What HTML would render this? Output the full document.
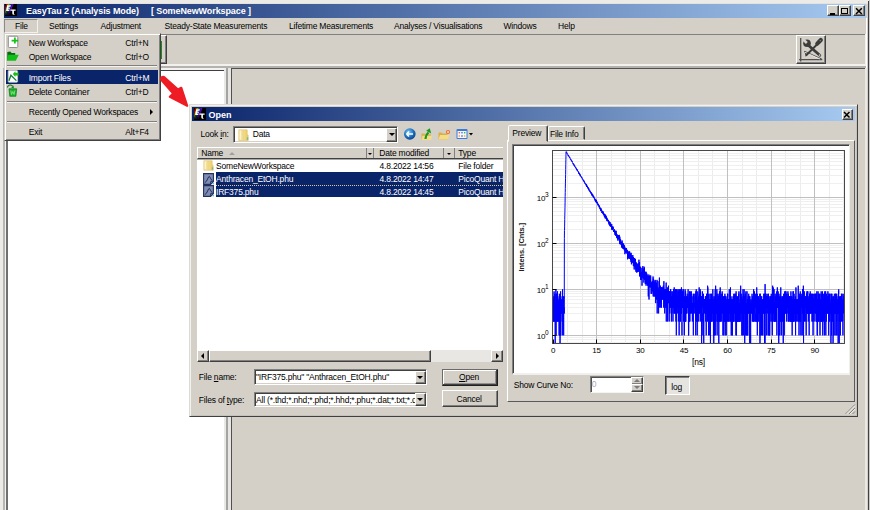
<!DOCTYPE html>
<html><head><meta charset="utf-8">
<style>
*{box-sizing:border-box}
html,body{margin:0;padding:0}
body{width:870px;height:510px;overflow:hidden;position:relative;background:#ecebe7;font-family:"Liberation Sans",sans-serif;font-size:8.5px;letter-spacing:-0.2px;color:#000}
.a{position:absolute}
.t{position:absolute;white-space:nowrap;line-height:10px;font-size:8.5px}
.raised{border:1px solid;border-color:#fff #404040 #404040 #fff;box-shadow:inset -1px -1px #808080;background:#d4d0c8}
.sunken{border:1px solid;border-color:#808080 #fff #fff #808080;box-shadow:inset 1px 1px #404040}
.cap{position:absolute;background:linear-gradient(to right,#0a246a,#a6caf0)}
.cbtn{position:absolute;width:12px;height:11px;background:#d4d0c8;border:1px solid;border-color:#fff #404040 #404040 #fff;box-shadow:inset -1px -1px #808080}
</style></head><body>

<!-- main window face -->
<div class="a" style="left:3px;top:3px;width:866px;height:507px;background:#d4d0c8;border-left:1px solid #e4e2dc;border-top:1px solid #e4e2dc"></div>
<div class="a" style="left:868px;top:1px;width:1px;height:509px;background:#404040"></div>
<div class="a" style="left:866px;top:18px;width:1px;height:492px;background:#ffffff"></div>

<!-- title bar -->
<div class="cap" style="left:4px;top:4px;width:862px;height:14px"></div>
<svg class="a" style="left:5px;top:4px" width="12" height="12" viewBox="0 0 12 12">
<defs><linearGradient id="fd5" x1="0" y1="0" x2="0" y2="1"><stop offset="0" stop-color="#000" stop-opacity="0"/><stop offset=".45" stop-color="#000" stop-opacity=".15"/><stop offset="1" stop-color="#000" stop-opacity=".95"/></linearGradient></defs>
<rect width="12" height="12" fill="#000"/>
<g opacity=".8"><path d="M1.20,0 L2.65,0 L-1.35,11 L-2.80,11 Z" fill="#e00000"/><path d="M2.65,0 L4.10,0 L0.10,11 L-1.35,11 Z" fill="#f0d000"/><path d="M4.10,0 L5.55,0 L1.55,11 L0.10,11 Z" fill="#20c020"/><path d="M5.55,0 L7.00,0 L3.00,11 L1.55,11 Z" fill="#2040ff"/><path d="M7.00,0 L8.45,0 L4.45,11 L3.00,11 Z" fill="#8a00ff"/></g>
<rect width="12" height="12" fill="url(#fd5)"/>
<path d="M2.2,1.3 H5.9 L5.5,2.7 H3.7 L3.4,3.7 H5.1 L4.8,4.8 H3.1 L2.8,5.6 H4.6 L4.2,6.9 H1.1 Z" fill="#fff"/>
<path d="M5.4,5.4 H10.6 V6.8 H8.9 V9.6 Q9,10.3 9.8,10.1 V10.6 Q7.4,11 7.3,9.4 V6.8 H5.4 Z" fill="#fff"/>
</svg>
<div class="t" style="left:26px;top:6px;color:#fff;font-weight:bold;font-size:9px;letter-spacing:-0.1px">EasyTau 2 (Analysis Mode)</div>
<div class="t" style="left:151px;top:6px;color:#fff;font-weight:bold;font-size:9px;letter-spacing:-0.1px">[ SomeNewWorkspace ]</div>
<div class="cbtn" style="left:827px;top:5px"><div class="a" style="left:1.5px;top:7px;width:5.5px;height:1.5px;background:#000"></div></div>
<div class="cbtn" style="left:839px;top:5px"><div class="a" style="left:0.8px;top:1.8px;width:7px;height:6px;border:1px solid #000;border-top-width:1.6px"></div></div>
<div class="cbtn" style="left:853px;top:5px"><svg class="a" style="left:0.5px;top:1px" width="8" height="8"><path d="M1,1.2 L6.8,7 M6.8,1.2 L1,7" stroke="#000" stroke-width="1.5"/></svg></div>

<!-- menu bar -->
<div class="a" style="left:4px;top:19px;width:34px;height:14px;border:1px solid;border-color:#8a8a88 #f2f1ee #f2f1ee #8a8a88"></div>
<div class="t" style="left:15px;top:21px">File</div>
<div class="t" style="left:49px;top:21px">Settings</div>
<div class="t" style="left:100.5px;top:21px">Adjustment</div>
<div class="t" style="left:164.5px;top:21px">Steady-State Measurements</div>
<div class="t" style="left:289px;top:21px">Lifetime Measurements</div>
<div class="t" style="left:394px;top:21px">Analyses / Visualisations</div>
<div class="t" style="left:503.5px;top:21px">Windows</div>
<div class="t" style="left:558px;top:21px">Help</div>

<!-- toolbar -->
<div class="a" style="left:4px;top:34px;width:862px;height:1px;background:#808080"></div>
<div class="a" style="left:4px;top:64px;width:862px;height:2px;background:#f2f1ee"></div>
<div class="a" style="left:4px;top:66px;width:862px;height:2px;background:#b4b2ae"></div>
<div class="a" style="left:865px;top:34px;width:1px;height:32px;background:#f2f1ee"></div>
<div class="a raised" style="left:130px;top:35px;width:37px;height:29px"></div>
<div class="a raised" style="left:796px;top:35px;width:30px;height:29px"></div>
<svg class="a" style="left:798px;top:37px" width="26" height="26" viewBox="0 0 26 26">
<path d="M2.7,1 V24.6 M1.1,22.7 H24.3" stroke="#505050" stroke-width="1.3" fill="none"/>
<path d="M6.2,14.3 L23.5,22" stroke="#505050" stroke-width="1.3" fill="none"/>
<path d="M6.8,15 L7.8,20 L9.5,17 Z" fill="#404040"/>
<path d="M7,15.3 L22,22" stroke="#fafafa" stroke-width=".8" fill="none"/>
<path d="M10,8 L21.8,18.3" stroke="#3c3c3c" stroke-width="2.8" stroke-linecap="round"/>
<circle cx="9" cy="6.2" r="3.8" fill="#3c3c3c"/>
<path d="M8.8,6 L5.2,2.3" stroke="#d4d0c8" stroke-width="2.6" stroke-linecap="butt"/>
<circle cx="21.6" cy="18.1" r=".9" fill="#bdbdbd"/>
<path d="M19,7.5 L8.5,18" stroke="#3c3c3c" stroke-width="2" stroke-linecap="round"/>
<path d="M22.8,3 L19.3,6.6" stroke="#3c3c3c" stroke-width="4.2" stroke-linecap="round"/>
<circle cx="22.3" cy="3.6" r=".7" fill="#8a8a8a"/>
</svg>

<!-- panels -->
<div class="a" style="left:5px;top:68px;width:221px;height:442px;background:#fff;border-left:1px solid #f4f4f2;border-top:2px solid #f2f1ef;border-right:2px solid #e8e8e6"></div>
<div class="a" style="left:3px;top:68px;width:2px;height:442px;background:#b8b6b0"></div>
<div class="a" style="left:6px;top:70px;width:2px;height:440px;background:#707070"></div>
<div class="a" style="left:6px;top:70px;width:218px;height:1px;background:#404040"></div>
<div class="a" style="left:226px;top:68px;width:2px;height:442px;background:#a4a4a2"></div>
<div class="a" style="left:228px;top:68px;width:3px;height:442px;background:#e8e6e2"></div>
<div class="a" style="left:231px;top:68px;width:635px;height:442px;background:#d4d0c8;border-left:1px solid #505050;border-top:1px solid #505050"></div>
<div class="a" style="left:865px;top:68px;width:2px;height:442px;background:#eae8e4"></div>
<div class="a" style="left:869px;top:0;width:1px;height:510px;background:#c8c8c8"></div>

<!-- File menu dropdown -->
<div class="a" style="left:4px;top:33px;width:156.5px;height:108px;background:#d4d0c8;border:1px solid;border-color:#d4d0c8 #404040 #404040 #d4d0c8;box-shadow:inset 1px 1px #fff,inset -1px -1px #808080"></div>
<div class="t" style="left:28.7px;top:38.3px">New Workspace</div><div class="t" style="left:125.3px;top:38.3px">Ctrl+N</div>
<div class="t" style="left:28.7px;top:52.4px">Open Workspace</div><div class="t" style="left:125.3px;top:52.4px">Ctrl+O</div>
<div class="a" style="left:7px;top:65px;width:150px;height:1px;background:#808080"></div>
<div class="a" style="left:7px;top:66px;width:150px;height:1px;background:#f4f3f0"></div>
<div class="a" style="left:6px;top:70px;width:152px;height:14px;background:#0a246a"></div>
<svg class="a" style="left:7px;top:35px" width="13" height="64" viewBox="0 0 13 64">
<rect x="1.3" y="1.2" width="9.5" height="11.3" rx="1" fill="#fff" stroke="#8c8c8c" stroke-width="1"/>
<path d="M4.6,5.6 H11.2 M7.9,2.6 V8.6" stroke="#18c018" stroke-width="1.7"/>
<path d="M0.3,17 L3.3,16.6 L4.6,17.9 L8.2,17.9 L8.2,20 L0.3,25.6 Z" fill="#0a6a14"/>
<path d="M1.3,19.8 L11.8,19.8 L8.8,25.8 L-0.2,25.8 Z" fill="#10c018"/>
<rect x="1.2" y="35.6" width="9.4" height="11.6" rx=".8" fill="#fff" stroke="#c8c8c8" stroke-width=".8"/>
<path d="M2,45.8 L3.9,40.2 L9.4,45.6" stroke="#108030" stroke-width="1.3" fill="none"/>
<path d="M5.8,39.1 L8.4,36.3 L8.4,37.8 L11.5,37.8 L11.5,40.4 L8.4,40.4 L8.4,41.9 Z" fill="#18c018"/>
<path d="M0,52.6 Q2.5,48.2 5.6,51.2" stroke="#107a20" stroke-width="1.1" fill="none"/>
<path d="M4.2,52.6 L6.6,50.6 L6.8,53.4 Z" fill="#107a20"/>
<path d="M2,53.8 H9.7 L8.9,61.3 H2.8 Z" fill="#18b028" stroke="#0a7a18" stroke-width=".7"/>
<path d="M3.8,55.5 L4.5,59.5 L5.8,56.5 L7.1,59.5 L7.8,55.5" stroke="#9ef0a0" stroke-width=".7" fill="none"/>
</svg>
<div class="t" style="left:28.7px;top:72.5px;color:#fff">Import Files</div><div class="t" style="left:125.3px;top:72.5px;color:#fff">Ctrl+M</div>
<div class="t" style="left:28.7px;top:86.5px">Delete Container</div><div class="t" style="left:125.3px;top:86.5px">Ctrl+D</div>
<div class="a" style="left:7px;top:100.5px;width:150px;height:1px;background:#808080"></div>
<div class="a" style="left:7px;top:101.5px;width:150px;height:1px;background:#f4f3f0"></div>
<div class="t" style="left:28.7px;top:107px">Recently Opened Workspaces</div>
<div class="a" style="left:149.5px;top:108.5px;width:0;height:0;border-left:3px solid #000;border-top:3px solid transparent;border-bottom:3px solid transparent"></div>
<div class="a" style="left:7px;top:121px;width:150px;height:1px;background:#808080"></div>
<div class="a" style="left:7px;top:122px;width:150px;height:1px;background:#f4f3f0"></div>
<div class="t" style="left:28.7px;top:127px">Exit</div><div class="t" style="left:125.3px;top:127px">Alt+F4</div>

<div class="a" style="left:160.5px;top:41px;width:1.2px;height:18px;background:#1e8a1e"></div>
<!-- red arrow -->
<svg class="a" style="left:0;top:0" width="870" height="510">
<path d="M161,79.5 Q161,76.5 164,77 L178,89.5 L181.3,87.8 L187.2,105.8 L169.8,96.8 L173.2,93.6 Z" fill="#ee1c24" stroke="#ee1c24" stroke-width="2.2" stroke-linejoin="round"/>
</svg>

<!-- Open dialog -->
<div class="a" style="left:189px;top:104px;width:669px;height:313px;background:#d4d0c8;border:1px solid;border-color:#dcdad5 #404040 #404040 #dcdad5;box-shadow:inset 1px 1px #f2f1ee,inset -1px -1px #c4c2bc"></div>
<div class="cap" style="left:192px;top:107px;width:663px;height:14px"></div>
<svg class="a" style="left:194px;top:108px" width="12" height="12" viewBox="0 0 12 12">
<defs><linearGradient id="fd194" x1="0" y1="0" x2="0" y2="1"><stop offset="0" stop-color="#000" stop-opacity="0"/><stop offset=".45" stop-color="#000" stop-opacity=".15"/><stop offset="1" stop-color="#000" stop-opacity=".95"/></linearGradient></defs>
<rect width="12" height="12" fill="#000"/>
<g opacity=".8"><path d="M1.20,0 L2.65,0 L-1.35,11 L-2.80,11 Z" fill="#e00000"/><path d="M2.65,0 L4.10,0 L0.10,11 L-1.35,11 Z" fill="#f0d000"/><path d="M4.10,0 L5.55,0 L1.55,11 L0.10,11 Z" fill="#20c020"/><path d="M5.55,0 L7.00,0 L3.00,11 L1.55,11 Z" fill="#2040ff"/><path d="M7.00,0 L8.45,0 L4.45,11 L3.00,11 Z" fill="#8a00ff"/></g>
<rect width="12" height="12" fill="url(#fd194)"/>
<path d="M2.2,1.3 H5.9 L5.5,2.7 H3.7 L3.4,3.7 H5.1 L4.8,4.8 H3.1 L2.8,5.6 H4.6 L4.2,6.9 H1.1 Z" fill="#fff"/>
<path d="M5.4,5.4 H10.6 V6.8 H8.9 V9.6 Q9,10.3 9.8,10.1 V10.6 Q7.4,11 7.3,9.4 V6.8 H5.4 Z" fill="#fff"/>
</svg>
<div class="t" style="left:208.5px;top:109.5px;color:#fff;font-weight:bold;font-size:9px;letter-spacing:0">Open</div>
<div class="cbtn" style="left:842px;top:109px;width:11px;height:10.5px"><svg class="a" style="left:-0.5px;top:0.5px" width="8" height="8"><path d="M1,1 L6.5,6.5 M6.5,1 L1,6.5" stroke="#000" stroke-width="1.5"/></svg></div>

<!-- look in -->
<div class="t" style="left:200.5px;top:129.3px">Look <u style="text-decoration-thickness:1px">i</u>n:</div>
<div class="a" style="left:233px;top:126px;width:165px;height:17px;background:#fff;border:1px solid;border-color:#808080 #fff #fff #808080;box-shadow:inset 1px 1px #404040,inset -1px -1px #d4d0c8"></div>
<svg class="a" style="left:237.5px;top:128.5px" width="11" height="12.5" viewBox="0 0 11 12" preserveAspectRatio="none">
<defs><linearGradient id="fg23751285" x1="0" y1="0" x2="1" y2="0"><stop offset="0" stop-color="#f0dc8c"/><stop offset=".45" stop-color="#f6e6a8"/><stop offset=".55" stop-color="#f2dc84"/><stop offset="1" stop-color="#e8c860"/></linearGradient></defs>
<path d="M0.8,0.8 H9.2 V5 L10.2,6 V11.2 H0.8 Z" fill="url(#fg23751285)" stroke="#e0c070" stroke-width=".6"/>
<path d="M2.2,1.5 V10" stroke="#fffbe8" stroke-width="1"/>
<path d="M5,1 V11" stroke="#dcc070" stroke-width=".6"/>
<rect x="8.8" y="8" width="1.4" height="2.4" fill="#70b8a0"/>
</svg>
<div class="t" style="left:252.7px;top:129.3px">Data</div>
<div class="a raised" style="left:386px;top:127.5px;width:11px;height:14px"></div>
<div class="a" style="left:389px;top:133px;width:0;height:0;border-top:3px solid #000;border-left:3px solid transparent;border-right:3px solid transparent"></div>
<svg class="a" style="left:403px;top:127px" width="72" height="14" viewBox="0 0 72 14">
<defs><radialGradient id="bb" cx=".4" cy=".35" r=".7"><stop offset="0" stop-color="#7ec8f8"/><stop offset=".6" stop-color="#1a6fc0"/><stop offset="1" stop-color="#0a3a80"/></radialGradient></defs>
<circle cx="6.8" cy="7" r="5.8" fill="url(#bb)"/>
<path d="M3.5,7 H10 M3.5,7 L6,4.5 M3.5,7 L6,9.5" stroke="#fff" stroke-width="1.5" fill="none"/>
<path d="M18.5,6.5 H21.5 L22.5,7.5 H28 V13 H18.5 Z" fill="#d8b04a"/>
<path d="M19.5,8.8 H29 L28,13 H18.5 Z" fill="#f4dc88"/>
<path d="M22.5,12 Q23,7.5 25.5,5.5" stroke="#1a9a1a" stroke-width="2.2" fill="none"/>
<path d="M23.2,3.8 L26.8,1.2 L28.2,6.4 Z" fill="#1a9a1a"/>
<path d="M35.5,5.5 H38.5 L39.5,6.5 H44.5 V12.5 H35.5 Z" fill="#d8b04a"/>
<path d="M37,8 H46.5 L44.5,12.5 H35.5 Z" fill="#f4dc88"/>
<circle cx="45" cy="5" r="2.1" fill="#f06a30"/>
<circle cx="45" cy="5" r=".9" fill="#fff0c0"/>
<rect x="53.5" y="2" width="11" height="10" rx="1" fill="#3a7ad8"/>
<rect x="54.5" y="4" width="9" height="7" fill="#f4f6fa"/>
<circle cx="56.3" cy="5.8" r=".8" fill="#e05030"/><circle cx="59" cy="5.8" r=".8" fill="#2a6ad0"/><circle cx="61.7" cy="5.8" r=".8" fill="#30a040"/>
<circle cx="56.3" cy="9" r=".8" fill="#f08a20"/><circle cx="59" cy="9" r=".8" fill="#2a4ab0"/><circle cx="61.7" cy="9" r=".8" fill="#e0a020"/>
<path d="M66,6 H70 L68,8.5 Z" fill="#000"/>
</svg>

<!-- list -->
<div class="a" style="left:197px;top:147px;width:306px;height:215px;background:#fff"></div>
<div class="a" style="left:197px;top:147px;width:306px;height:12px;background:#d4d0c8;border-top:1px solid #fff;border-left:1px solid #fff;border-bottom:1px solid #404040"></div>
<div class="a" style="left:197px;top:159px;width:306px;height:1px;background:#a8a8a8"></div>
<div class="t" style="left:201.2px;top:148.2px">Name</div>
<div class="a" style="left:228.5px;top:151.5px;width:0;height:0;border-bottom:3px solid #a0a0a0;border-left:3px solid transparent;border-right:3px solid transparent"></div>
<div class="a" style="left:365.5px;top:148px;width:1px;height:10px;background:#808080"></div>
<div class="a" style="left:372.5px;top:148px;width:1px;height:10px;background:#808080"></div>
<div class="a" style="left:367.5px;top:152.5px;width:0;height:0;border-top:2.5px solid #000;border-left:2.5px solid transparent;border-right:2.5px solid transparent"></div>
<div class="t" style="left:379.3px;top:148.2px">Date modified</div>
<div class="a" style="left:443px;top:148px;width:1px;height:10px;background:#808080"></div>
<div class="a" style="left:453.5px;top:148px;width:1px;height:10px;background:#808080"></div>
<div class="a" style="left:446.5px;top:152.5px;width:0;height:0;border-top:2.5px solid #000;border-left:2.5px solid transparent;border-right:2.5px solid transparent"></div>
<div class="t" style="left:458.3px;top:148.2px">Type</div>

<svg class="a" style="left:203px;top:159.5px" width="11" height="11" viewBox="0 0 11 12" preserveAspectRatio="none">
<defs><linearGradient id="fg20301595" x1="0" y1="0" x2="1" y2="0"><stop offset="0" stop-color="#f0dc8c"/><stop offset=".45" stop-color="#f6e6a8"/><stop offset=".55" stop-color="#f2dc84"/><stop offset="1" stop-color="#e8c860"/></linearGradient></defs>
<path d="M0.8,0.8 H9.2 V5 L10.2,6 V11.2 H0.8 Z" fill="url(#fg20301595)" stroke="#e0c070" stroke-width=".6"/>
<path d="M2.2,1.5 V10" stroke="#fffbe8" stroke-width="1"/>
<path d="M5,1 V11" stroke="#dcc070" stroke-width=".6"/>
<rect x="8.8" y="8" width="1.4" height="2.4" fill="#70b8a0"/>
</svg>
<div class="t" style="left:216px;top:160.8px">SomeNewWorkspace</div>
<div class="t" style="left:379.5px;top:160.8px">4.8.2022 14:56</div>
<div class="t" style="left:458.3px;top:160.8px">File folder</div>
<div class="a" style="left:215.5px;top:172.2px;width:287.5px;height:24.8px;background:#0a246a"></div>
<div class="a" style="left:215.5px;top:184.5px;width:287.5px;height:0;border-top:1px dotted #d8c8a0"></div>
<svg class="a" style="left:203px;top:172.5px" width="11" height="12" viewBox="0 0 11 12">
<path d="M.6,.6 H10.4 V8.6 L7.6,11.4 H.6 Z" fill="#7f8db5" stroke="#22305e" stroke-width="1.1"/>
<path d="M7.6,11.4 V8.6 H10.4" fill="none" stroke="#22305e" stroke-width=".9"/>
<path d="M1.8,9.6 Q3.5,9 4.6,6 Q5.6,3.2 6.4,3.4 Q7.2,5 9.2,7.8" stroke="#1a2448" stroke-width=".9" fill="none"/>
<rect x="9.6" y="9.8" width="1.2" height="1.6" fill="#40b0d0"/>
</svg>
<svg class="a" style="left:203px;top:185px" width="11" height="12" viewBox="0 0 11 12">
<path d="M.6,.6 H10.4 V8.6 L7.6,11.4 H.6 Z" fill="#7f8db5" stroke="#22305e" stroke-width="1.1"/>
<path d="M7.6,11.4 V8.6 H10.4" fill="none" stroke="#22305e" stroke-width=".9"/>
<path d="M1.8,9.6 Q3.5,9 4.6,6 Q5.6,3.2 6.4,3.4 Q7.2,5 9.2,7.8" stroke="#1a2448" stroke-width=".9" fill="none"/>
<rect x="9.6" y="9.8" width="1.2" height="1.6" fill="#40b0d0"/>
</svg>
<div class="t" style="left:216px;top:173.8px;color:#fff">Anthracen_EtOH.phu</div>
<div class="t" style="left:379.5px;top:173.8px;color:#fff">4.8.2022 14:47</div>
<div class="a" style="left:458.3px;top:173.8px;width:44.7px;height:11px;overflow:hidden"><div class="t" style="left:0;top:0;color:#fff">PicoQuant HydraHarp</div></div>
<div class="t" style="left:216px;top:186.60000000000002px;color:#fff">IRF375.phu</div>
<div class="t" style="left:379.5px;top:186.60000000000002px;color:#fff">4.8.2022 14:45</div>
<div class="a" style="left:458.3px;top:186.60000000000002px;width:44.7px;height:11px;overflow:hidden"><div class="t" style="left:0;top:0;color:#fff">PicoQuant HydraHarp</div></div>

<!-- h scrollbar -->
<div class="a" style="left:197px;top:350px;width:306px;height:12px;background:#e9e7e3"></div>
<div class="a raised" style="left:197px;top:350px;width:12px;height:12px"></div>
<div class="a" style="left:201px;top:352.7px;width:0;height:0;border-right:3px solid #000;border-top:3px solid transparent;border-bottom:3px solid transparent"></div>
<div class="a raised" style="left:209px;top:350px;width:222px;height:12px"></div>
<div class="a raised" style="left:491px;top:350px;width:12px;height:12px"></div>
<div class="a" style="left:495.5px;top:352.7px;width:0;height:0;border-left:3px solid #000;border-top:3px solid transparent;border-bottom:3px solid transparent"></div>

<!-- filename / type -->
<div class="t" style="left:198.8px;top:371.7px">File <u>n</u>ame:</div>
<div class="a" style="left:253.5px;top:369.2px;width:173.5px;height:16px;background:#fff;border:1px solid;border-color:#808080 #fff #fff #808080;box-shadow:inset 1px 1px #404040,inset -1px -1px #d4d0c8"></div>
<div class="t" style="left:256px;top:372px">"IRF375.phu" "Anthracen_EtOH.phu"</div>
<div class="a raised" style="left:414.7px;top:370.6px;width:11.3px;height:13.4px"></div>
<div class="a" style="left:417.3px;top:376px;width:0;height:0;border-top:3px solid #000;border-left:3px solid transparent;border-right:3px solid transparent"></div>

<div class="t" style="left:198.8px;top:394.7px">Files of <u>t</u>ype:</div>
<div class="a" style="left:253.5px;top:391.8px;width:173.5px;height:15px;background:#fff;border:1px solid;border-color:#808080 #fff #fff #808080;box-shadow:inset 1px 1px #404040,inset -1px -1px #d4d0c8;overflow:hidden"><div class="t" style="left:1.5px;top:2.3px">All (*.thd;*.nhd;*.phd;*.hhd;*.phu;*.dat;*.txt;*.dat)</div></div>
<div class="a raised" style="left:414.7px;top:393px;width:11.3px;height:12.8px"></div>
<div class="a" style="left:417.3px;top:398px;width:0;height:0;border-top:3px solid #000;border-left:3px solid transparent;border-right:3px solid transparent"></div>

<div class="a" style="left:442px;top:368.5px;width:56px;height:17px;border:1px solid;border-color:#6a6a6a #202020 #202020 #6a6a6a;box-shadow:inset -1px -1px #404040;background:#d4d0c8"><div class="a" style="left:0;top:0;width:53px;height:14px;border-top:1px solid #fff;border-left:1px solid #fff;box-shadow:inset -1px -1px #909090"></div></div>
<div class="t" style="left:459px;top:372px"><u>O</u>pen</div>
<div class="a raised" style="left:442px;top:390px;width:56px;height:17px"></div>
<div class="t" style="left:456.5px;top:394px">Cancel</div>

<!-- tabs -->
<div class="a" style="left:507px;top:140px;width:348px;height:262px;border:1px solid;border-color:#fff #5a5a5a #5a5a5a #fff"></div>
<div class="a" style="left:507.5px;top:125px;width:40px;height:16.5px;background:#d4d0c8;border:1px solid;border-color:#fff #404040 transparent #fff;border-radius:2px 2px 0 0;box-shadow:inset -1px 0 #808080"></div>
<div class="t" style="left:512.3px;top:127.8px">Preview</div>
<div class="a" style="left:547.5px;top:126.3px;width:37px;height:13.7px;background:#d4d0c8;border:1px solid;border-color:#fff #404040 transparent #fff;border-radius:2px 2px 0 0;box-shadow:inset -1px 0 #808080"></div>
<div class="t" style="left:550px;top:129.3px">File Info</div>

<div class="a" style="left:511.5px;top:143.5px;width:338.5px;height:231px;background:#fff;border:1px solid;border-color:#808080 #f0efec #f0efec #808080;border-bottom-width:2px;box-shadow:inset 1px 1px #404040"></div>

<svg class="a" style="left:0;top:0" width="870" height="510" font-family="Liberation Sans" font-size="8px" letter-spacing="-0.2">
<defs><clipPath id="pc"><rect x="552.5" y="150.5" width="292.0" height="193.0"/></clipPath></defs>
<path d="M567.5,150.5 V343.5" stroke="#ececec" stroke-width="1"/><path d="M582.5,150.5 V343.5" stroke="#ececec" stroke-width="1"/><path d="M611.5,150.5 V343.5" stroke="#ececec" stroke-width="1"/><path d="M625.5,150.5 V343.5" stroke="#ececec" stroke-width="1"/><path d="M654.5,150.5 V343.5" stroke="#ececec" stroke-width="1"/><path d="M669.5,150.5 V343.5" stroke="#ececec" stroke-width="1"/><path d="M698.5,150.5 V343.5" stroke="#ececec" stroke-width="1"/><path d="M712.5,150.5 V343.5" stroke="#ececec" stroke-width="1"/><path d="M742.5,150.5 V343.5" stroke="#ececec" stroke-width="1"/><path d="M756.5,150.5 V343.5" stroke="#ececec" stroke-width="1"/><path d="M785.5,150.5 V343.5" stroke="#ececec" stroke-width="1"/><path d="M800.5,150.5 V343.5" stroke="#ececec" stroke-width="1"/><path d="M829.5,150.5 V343.5" stroke="#ececec" stroke-width="1"/><path d="M843.5,150.5 V343.5" stroke="#ececec" stroke-width="1"/><path d="M552.5,342.5 H844.5" stroke="#efefef" stroke-width="1"/><path d="M552.5,339.5 H844.5" stroke="#efefef" stroke-width="1"/><path d="M552.5,337.5 H844.5" stroke="#efefef" stroke-width="1"/><path d="M552.5,321.5 H844.5" stroke="#efefef" stroke-width="1"/><path d="M552.5,313.5 H844.5" stroke="#efefef" stroke-width="1"/><path d="M552.5,307.5 H844.5" stroke="#efefef" stroke-width="1"/><path d="M552.5,303.5 H844.5" stroke="#efefef" stroke-width="1"/><path d="M552.5,299.5 H844.5" stroke="#efefef" stroke-width="1"/><path d="M552.5,296.5 H844.5" stroke="#efefef" stroke-width="1"/><path d="M552.5,293.5 H844.5" stroke="#efefef" stroke-width="1"/><path d="M552.5,291.5 H844.5" stroke="#efefef" stroke-width="1"/><path d="M552.5,275.5 H844.5" stroke="#efefef" stroke-width="1"/><path d="M552.5,267.5 H844.5" stroke="#efefef" stroke-width="1"/><path d="M552.5,261.5 H844.5" stroke="#efefef" stroke-width="1"/><path d="M552.5,257.5 H844.5" stroke="#efefef" stroke-width="1"/><path d="M552.5,253.5 H844.5" stroke="#efefef" stroke-width="1"/><path d="M552.5,250.5 H844.5" stroke="#efefef" stroke-width="1"/><path d="M552.5,247.5 H844.5" stroke="#efefef" stroke-width="1"/><path d="M552.5,245.5 H844.5" stroke="#efefef" stroke-width="1"/><path d="M552.5,229.5 H844.5" stroke="#efefef" stroke-width="1"/><path d="M552.5,221.5 H844.5" stroke="#efefef" stroke-width="1"/><path d="M552.5,215.5 H844.5" stroke="#efefef" stroke-width="1"/><path d="M552.5,211.5 H844.5" stroke="#efefef" stroke-width="1"/><path d="M552.5,207.5 H844.5" stroke="#efefef" stroke-width="1"/><path d="M552.5,204.5 H844.5" stroke="#efefef" stroke-width="1"/><path d="M552.5,201.5 H844.5" stroke="#efefef" stroke-width="1"/><path d="M552.5,199.5 H844.5" stroke="#efefef" stroke-width="1"/><path d="M552.5,183.5 H844.5" stroke="#efefef" stroke-width="1"/><path d="M552.5,175.5 H844.5" stroke="#efefef" stroke-width="1"/><path d="M552.5,169.5 H844.5" stroke="#efefef" stroke-width="1"/><path d="M552.5,165.5 H844.5" stroke="#efefef" stroke-width="1"/><path d="M552.5,161.5 H844.5" stroke="#efefef" stroke-width="1"/><path d="M552.5,158.5 H844.5" stroke="#efefef" stroke-width="1"/><path d="M552.5,155.5 H844.5" stroke="#efefef" stroke-width="1"/><path d="M552.5,153.5 H844.5" stroke="#efefef" stroke-width="1"/><path d="M596.5,150.5 V343.5" stroke="#c0c0c0" stroke-width="1"/><path d="M640.5,150.5 V343.5" stroke="#c0c0c0" stroke-width="1"/><path d="M683.5,150.5 V343.5" stroke="#c0c0c0" stroke-width="1"/><path d="M727.5,150.5 V343.5" stroke="#c0c0c0" stroke-width="1"/><path d="M771.5,150.5 V343.5" stroke="#c0c0c0" stroke-width="1"/><path d="M814.5,150.5 V343.5" stroke="#c0c0c0" stroke-width="1"/><path d="M552.5,335.5 H844.5" stroke="#c0c0c0" stroke-width="1"/><path d="M552.5,289.5 H844.5" stroke="#c0c0c0" stroke-width="1"/><path d="M552.5,243.5 H844.5" stroke="#c0c0c0" stroke-width="1"/><path d="M552.5,197.5 H844.5" stroke="#c0c0c0" stroke-width="1"/>
<g clip-path="url(#pc)"><path d="M553.00,313.4 L553.09,313.4 L553.18,321.5 L553.26,313.4 L553.35,299.5 L553.44,313.4 L553.53,303.1 L553.62,321.5 L553.71,303.1 L553.79,296.4 L553.88,303.1 L553.97,313.4 L554.06,291.4 L554.15,299.5 L554.23,321.5 L554.32,321.5 L554.41,321.5 L554.50,313.4 L554.59,296.4 L554.67,307.6 L554.76,307.6 L554.85,293.8 L554.94,299.5 L555.03,321.5 L555.12,313.4 L555.20,347.5 L555.29,321.5 L555.38,313.4 L555.47,313.4 L555.56,303.1 L555.64,307.6 L555.73,307.6 L555.82,299.5 L555.91,289.3 L556.00,313.4 L556.09,335.3 L556.17,293.8 L556.26,321.5 L556.35,299.5 L556.44,296.4 L556.53,296.4 L556.61,299.5 L556.70,313.4 L556.79,293.8 L556.88,307.6 L556.97,299.5 L557.05,307.6 L557.14,321.5 L557.23,303.1 L557.32,303.1 L557.41,293.8 L557.50,291.4 L557.58,307.6 L557.67,321.5 L557.76,307.6 L557.85,296.4 L557.94,299.5 L558.02,313.4 L558.11,321.5 L558.20,313.4 L558.29,303.1 L558.38,303.1 L558.47,303.1 L558.55,313.4 L558.64,303.1 L558.73,299.5 L558.82,313.4 L558.91,321.5 L558.99,307.6 L559.08,335.3 L559.17,335.3 L559.26,303.1 L559.35,293.8 L559.44,303.1 L559.52,335.3 L559.61,313.4 L559.70,303.1 L559.79,313.4 L559.88,296.4 L559.96,307.6 L560.05,347.5 L560.14,321.5 L560.23,335.3 L560.32,299.5 L560.40,299.5 L560.49,299.5 L560.58,291.4 L560.67,335.3 L560.76,303.1 L560.85,321.5 L560.93,303.1 L561.02,313.4 L561.11,299.5 L561.20,303.1 L561.29,307.6 L561.37,313.4 L561.46,303.1 L561.55,307.6 L561.64,303.1 L561.73,307.6 L561.82,299.5 L561.90,313.4 L561.99,313.4 L562.08,313.4 L562.17,296.4 L562.26,303.1 L562.34,335.3 L562.43,303.1 L562.52,289.3 L562.61,303.1 L562.70,307.6 L562.78,299.5 L562.87,321.5 L562.96,299.5 L563.05,321.5 L563.14,321.5 L563.23,296.4 L563.31,313.4 L563.40,303.1 L563.49,303.1 L563.58,313.4 L563.67,335.3 L563.75,299.5 L563.84,296.4 L563.93,313.4 L564.02,307.6 L564.11,313.4 L564.20,303.1 L564.28,299.5 L564.37,238.7 L564.46,230.5 L564.55,230.0 L564.64,226.1 L564.72,219.3 L564.81,215.8 L564.90,211.8 L564.99,207.4 L565.08,202.1 L565.16,196.5 L565.25,192.4 L565.34,188.3 L565.43,183.1 L565.52,178.8 L565.61,174.7 L565.69,169.3 L565.78,164.8 L565.87,159.8 L565.96,155.6 L566.05,152.0 L566.13,151.7 L566.22,151.5 L566.31,152.3 L566.40,152.0 L566.49,152.4 L566.58,152.4 L566.66,152.7 L566.75,153.1 L566.84,152.8 L566.93,153.2 L567.02,153.3 L567.10,153.3 L567.19,153.9 L567.28,153.6 L567.37,153.8 L567.46,154.1 L567.54,154.3 L567.63,154.3 L567.72,154.4 L567.81,154.7 L567.90,154.7 L567.99,154.9 L568.07,155.4 L568.16,154.9 L568.25,155.1 L568.34,155.8 L568.43,155.1 L568.51,155.8 L568.60,156.0 L568.69,156.0 L568.78,155.9 L568.87,156.5 L568.96,156.2 L569.04,156.6 L569.13,157.0 L569.22,156.8 L569.31,157.2 L569.40,157.1 L569.48,157.2 L569.57,157.5 L569.66,158.0 L569.75,157.4 L569.84,157.6 L569.93,157.7 L570.01,158.2 L570.10,158.2 L570.19,158.4 L570.28,159.1 L570.37,158.9 L570.45,159.0 L570.54,159.4 L570.63,159.3 L570.72,159.3 L570.81,159.7 L570.89,160.1 L570.98,159.5 L571.07,159.8 L571.16,160.1 L571.25,160.2 L571.34,160.9 L571.42,160.5 L571.51,160.7 L571.60,160.4 L571.69,160.8 L571.78,161.2 L571.86,160.9 L571.95,161.3 L572.04,161.8 L572.13,161.9 L572.22,161.3 L572.31,162.2 L572.39,162.4 L572.48,162.4 L572.57,162.7 L572.66,162.7 L572.75,162.8 L572.83,162.9 L572.92,163.7 L573.01,163.7 L573.10,163.9 L573.19,163.3 L573.27,163.6 L573.36,164.5 L573.45,163.9 L573.54,163.8 L573.63,164.3 L573.72,164.4 L573.80,164.3 L573.89,165.3 L573.98,164.8 L574.07,164.8 L574.16,164.7 L574.24,165.3 L574.33,166.0 L574.42,165.5 L574.51,166.1 L574.60,166.0 L574.69,165.8 L574.77,166.5 L574.86,165.9 L574.95,166.3 L575.04,166.5 L575.13,166.7 L575.21,167.1 L575.30,167.0 L575.39,167.1 L575.48,167.6 L575.57,167.5 L575.65,167.0 L575.74,167.8 L575.83,167.7 L575.92,168.1 L576.01,168.1 L576.10,168.3 L576.18,169.0 L576.27,168.6 L576.36,169.0 L576.45,168.8 L576.54,169.4 L576.62,169.0 L576.71,169.6 L576.80,170.0 L576.89,169.4 L576.98,170.2 L577.07,169.5 L577.15,169.7 L577.24,170.3 L577.33,170.0 L577.42,170.9 L577.51,170.3 L577.59,170.7 L577.68,170.7 L577.77,171.1 L577.86,171.1 L577.95,171.1 L578.04,171.8 L578.12,171.8 L578.21,171.5 L578.30,171.6 L578.39,172.1 L578.48,172.2 L578.56,171.8 L578.65,173.2 L578.74,173.6 L578.83,172.5 L578.92,172.8 L579.00,172.9 L579.09,173.9 L579.18,173.4 L579.27,173.6 L579.36,173.8 L579.45,173.7 L579.53,173.7 L579.62,173.3 L579.71,175.0 L579.80,174.9 L579.89,175.1 L579.97,174.2 L580.06,175.2 L580.15,175.0 L580.24,175.0 L580.33,176.2 L580.42,175.1 L580.50,175.3 L580.59,176.0 L580.68,176.1 L580.77,176.2 L580.86,176.1 L580.94,176.3 L581.03,176.2 L581.12,177.1 L581.21,177.1 L581.30,176.9 L581.38,177.0 L581.47,177.5 L581.56,176.9 L581.65,177.4 L581.74,177.4 L581.83,177.6 L581.91,177.3 L582.00,178.2 L582.09,178.3 L582.18,178.1 L582.27,178.3 L582.35,179.2 L582.44,179.0 L582.53,178.8 L582.62,179.0 L582.71,179.4 L582.80,179.8 L582.88,179.6 L582.97,179.4 L583.06,179.5 L583.15,180.1 L583.24,180.5 L583.32,180.4 L583.41,181.2 L583.50,180.2 L583.59,180.3 L583.68,180.9 L583.76,180.8 L583.85,180.5 L583.94,181.3 L584.03,181.4 L584.12,181.2 L584.21,182.0 L584.29,181.7 L584.38,182.4 L584.47,181.8 L584.56,182.6 L584.65,182.4 L584.73,182.5 L584.82,183.4 L584.91,183.1 L585.00,182.9 L585.09,183.3 L585.18,183.6 L585.26,183.8 L585.35,183.9 L585.44,183.8 L585.53,184.0 L585.62,183.5 L585.70,184.0 L585.79,184.5 L585.88,185.3 L585.97,184.6 L586.06,184.5 L586.14,185.0 L586.23,184.3 L586.32,184.4 L586.41,184.8 L586.50,185.6 L586.59,184.7 L586.67,185.5 L586.76,186.8 L586.85,185.4 L586.94,186.9 L587.03,187.0 L587.11,186.1 L587.20,186.0 L587.29,186.7 L587.38,186.5 L587.47,186.6 L587.56,188.0 L587.64,187.3 L587.73,187.2 L587.82,188.2 L587.91,187.5 L588.00,188.2 L588.08,188.0 L588.17,188.3 L588.26,187.6 L588.35,188.5 L588.44,188.8 L588.53,189.7 L588.61,189.3 L588.70,188.2 L588.79,189.1 L588.88,188.9 L588.97,189.1 L589.05,190.5 L589.14,190.1 L589.23,190.2 L589.32,189.7 L589.41,190.8 L589.49,190.8 L589.58,190.9 L589.67,191.2 L589.76,191.0 L589.85,191.0 L589.94,191.7 L590.02,191.8 L590.11,191.4 L590.20,190.7 L590.29,191.7 L590.38,192.5 L590.46,191.8 L590.55,191.6 L590.64,192.1 L590.73,192.3 L590.82,192.9 L590.91,192.7 L590.99,193.6 L591.08,192.8 L591.17,192.5 L591.26,193.2 L591.35,192.7 L591.43,193.2 L591.52,193.7 L591.61,194.6 L591.70,193.5 L591.79,194.0 L591.87,195.5 L591.96,193.6 L592.05,193.9 L592.14,194.0 L592.23,194.0 L592.32,195.1 L592.40,195.1 L592.49,195.8 L592.58,194.9 L592.67,195.8 L592.76,194.6 L592.84,196.4 L592.93,195.6 L593.02,195.4 L593.11,196.2 L593.20,196.7 L593.29,197.3 L593.37,196.0 L593.46,196.3 L593.55,196.1 L593.64,197.5 L593.73,196.3 L593.81,197.1 L593.90,197.1 L593.99,197.5 L594.08,198.2 L594.17,198.2 L594.25,197.6 L594.34,198.5 L594.43,198.4 L594.52,198.6 L594.61,198.5 L594.70,198.1 L594.78,199.6 L594.87,199.0 L594.96,199.7 L595.05,199.5 L595.14,200.1 L595.22,200.9 L595.31,200.2 L595.40,201.1 L595.49,199.3 L595.58,201.4 L595.67,201.0 L595.75,200.5 L595.84,201.1 L595.93,200.1 L596.02,201.3 L596.11,202.4 L596.19,200.7 L596.28,201.9 L596.37,199.8 L596.46,202.5 L596.55,202.4 L596.63,202.2 L596.72,203.2 L596.81,202.0 L596.90,201.6 L596.99,201.6 L597.08,202.5 L597.16,203.1 L597.25,202.2 L597.34,202.4 L597.43,203.6 L597.52,204.0 L597.60,204.4 L597.69,203.8 L597.78,204.1 L597.87,203.6 L597.96,203.6 L598.05,205.4 L598.13,204.3 L598.22,204.5 L598.31,205.2 L598.40,205.0 L598.49,204.2 L598.57,205.4 L598.66,205.5 L598.75,205.9 L598.84,205.6 L598.93,206.3 L599.02,205.7 L599.10,207.2 L599.19,207.0 L599.28,206.2 L599.37,205.7 L599.46,207.3 L599.54,206.9 L599.63,206.6 L599.72,207.5 L599.81,207.2 L599.90,207.3 L599.98,208.8 L600.07,209.2 L600.16,207.8 L600.25,209.0 L600.34,208.3 L600.43,208.3 L600.51,209.3 L600.60,209.6 L600.69,209.6 L600.78,208.1 L600.87,211.1 L600.95,208.6 L601.04,209.5 L601.13,210.3 L601.22,209.5 L601.31,210.1 L601.40,210.9 L601.48,210.4 L601.57,210.3 L601.66,210.2 L601.75,210.6 L601.84,210.9 L601.92,213.0 L602.01,211.8 L602.10,210.8 L602.19,210.9 L602.28,212.3 L602.36,212.3 L602.45,212.9 L602.54,213.3 L602.63,211.7 L602.72,211.5 L602.81,212.5 L602.89,212.2 L602.98,211.4 L603.07,213.9 L603.16,212.9 L603.25,213.2 L603.33,212.4 L603.42,214.7 L603.51,215.1 L603.60,213.3 L603.69,214.5 L603.78,213.7 L603.86,213.6 L603.95,213.8 L604.04,213.6 L604.13,214.3 L604.22,214.7 L604.30,216.4 L604.39,214.1 L604.48,216.4 L604.57,215.4 L604.66,214.2 L604.74,217.2 L604.83,215.0 L604.92,216.6 L605.01,216.1 L605.10,217.8 L605.19,218.4 L605.27,216.0 L605.36,214.6 L605.45,215.9 L605.54,216.7 L605.63,216.8 L605.71,215.5 L605.80,215.7 L605.89,218.0 L605.98,218.6 L606.07,215.9 L606.16,218.2 L606.24,217.3 L606.33,216.9 L606.42,219.1 L606.51,219.0 L606.60,220.1 L606.68,217.5 L606.77,219.0 L606.86,218.1 L606.95,220.6 L607.04,218.6 L607.13,220.4 L607.21,219.8 L607.30,221.2 L607.39,220.1 L607.48,219.3 L607.57,220.4 L607.65,220.6 L607.74,219.9 L607.83,220.9 L607.92,220.2 L608.01,220.8 L608.09,220.1 L608.18,221.6 L608.27,221.1 L608.36,221.2 L608.45,219.9 L608.54,221.3 L608.62,223.1 L608.71,223.4 L608.80,222.2 L608.89,222.7 L608.98,223.4 L609.06,223.2 L609.15,221.8 L609.24,225.0 L609.33,222.7 L609.42,223.5 L609.51,221.6 L609.59,225.6 L609.68,223.0 L609.77,223.9 L609.86,223.7 L609.95,223.5 L610.03,222.0 L610.12,223.8 L610.21,223.8 L610.30,226.3 L610.39,224.0 L610.47,226.6 L610.56,225.2 L610.65,224.6 L610.74,223.6 L610.83,224.2 L610.92,225.3 L611.00,224.7 L611.09,226.1 L611.18,225.9 L611.27,226.2 L611.36,225.2 L611.44,226.7 L611.53,227.8 L611.62,228.3 L611.71,224.0 L611.80,229.8 L611.89,227.2 L611.97,227.5 L612.06,227.6 L612.15,228.9 L612.24,227.0 L612.33,227.7 L612.41,229.4 L612.50,228.7 L612.59,230.1 L612.68,227.9 L612.77,226.1 L612.85,226.7 L612.94,227.5 L613.03,229.0 L613.12,229.1 L613.21,228.6 L613.30,227.3 L613.38,229.5 L613.47,229.8 L613.56,231.6 L613.65,230.0 L613.74,229.9 L613.82,231.2 L613.91,231.8 L614.00,230.6 L614.09,230.2 L614.18,231.9 L614.27,230.0 L614.35,231.6 L614.44,230.8 L614.53,229.4 L614.62,232.3 L614.71,231.7 L614.79,232.2 L614.88,232.5 L614.97,231.6 L615.06,234.7 L615.15,232.0 L615.23,234.8 L615.32,233.7 L615.41,231.7 L615.50,235.7 L615.59,231.2 L615.68,230.7 L615.76,231.8 L615.85,232.6 L615.94,233.5 L616.03,234.2 L616.12,230.9 L616.20,235.7 L616.29,234.3 L616.38,233.5 L616.47,235.3 L616.56,236.7 L616.65,234.4 L616.73,234.9 L616.82,238.1 L616.91,236.2 L617.00,236.7 L617.09,236.0 L617.17,234.8 L617.26,234.5 L617.35,238.1 L617.44,236.2 L617.53,237.3 L617.62,239.3 L617.70,235.5 L617.79,237.5 L617.88,237.3 L617.97,240.7 L618.06,236.3 L618.14,237.2 L618.23,236.3 L618.32,238.4 L618.41,235.2 L618.50,237.3 L618.58,238.8 L618.67,237.3 L618.76,237.2 L618.85,239.3 L618.94,236.7 L619.03,237.9 L619.11,237.5 L619.20,237.2 L619.29,234.9 L619.38,239.3 L619.47,240.2 L619.55,238.7 L619.64,239.8 L619.73,244.1 L619.82,236.7 L619.91,239.2 L620.00,243.3 L620.08,241.6 L620.17,240.0 L620.26,241.2 L620.35,241.4 L620.44,240.3 L620.52,239.3 L620.61,239.3 L620.70,240.9 L620.79,240.7 L620.88,244.7 L620.96,244.7 L621.05,241.9 L621.14,243.1 L621.23,241.9 L621.32,243.9 L621.41,243.7 L621.49,242.9 L621.58,247.5 L621.67,245.4 L621.76,241.9 L621.85,243.1 L621.93,245.4 L622.02,242.9 L622.11,240.5 L622.20,241.2 L622.29,246.3 L622.38,245.2 L622.46,248.3 L622.55,245.6 L622.64,247.3 L622.73,246.3 L622.82,244.1 L622.90,245.4 L622.99,245.6 L623.08,248.5 L623.17,243.5 L623.26,246.1 L623.34,248.5 L623.43,245.6 L623.52,243.7 L623.61,249.0 L623.70,245.2 L623.79,249.0 L623.87,244.7 L623.96,245.2 L624.05,247.3 L624.14,249.0 L624.23,250.1 L624.31,249.0 L624.40,245.6 L624.49,246.8 L624.58,247.5 L624.67,248.8 L624.76,248.0 L624.84,246.8 L624.93,254.2 L625.02,249.0 L625.11,248.3 L625.20,251.0 L625.28,249.9 L625.37,249.3 L625.46,251.6 L625.55,251.9 L625.64,252.8 L625.73,251.6 L625.81,249.6 L625.90,248.0 L625.99,250.1 L626.08,250.7 L626.17,252.2 L626.25,249.9 L626.34,251.3 L626.43,248.3 L626.52,250.7 L626.61,248.8 L626.69,250.1 L626.78,251.3 L626.87,250.7 L626.96,253.5 L627.05,250.1 L627.14,252.2 L627.22,253.8 L627.31,251.9 L627.40,250.1 L627.49,252.2 L627.58,259.3 L627.66,254.2 L627.75,252.5 L627.84,251.6 L627.93,255.2 L628.02,252.5 L628.11,251.6 L628.19,252.2 L628.28,258.4 L628.37,255.2 L628.46,255.6 L628.55,255.2 L628.63,254.5 L628.72,251.6 L628.81,254.5 L628.90,257.6 L628.99,258.4 L629.07,253.2 L629.16,257.6 L629.25,255.6 L629.34,251.9 L629.43,251.6 L629.52,251.6 L629.60,258.8 L629.69,251.6 L629.78,255.6 L629.87,253.2 L629.96,255.6 L630.04,253.2 L630.13,256.0 L630.22,256.0 L630.31,256.8 L630.40,258.8 L630.49,256.4 L630.57,254.5 L630.66,260.2 L630.75,256.4 L630.84,259.7 L630.93,260.6 L631.01,262.1 L631.10,252.8 L631.19,257.1 L631.28,258.4 L631.37,255.2 L631.45,264.3 L631.54,257.6 L631.63,259.7 L631.72,256.4 L631.81,262.6 L631.90,258.4 L631.98,258.8 L632.07,255.2 L632.16,260.2 L632.25,259.3 L632.34,258.0 L632.42,258.0 L632.51,258.0 L632.60,259.3 L632.69,262.6 L632.78,256.4 L632.87,255.2 L632.95,259.7 L633.04,262.1 L633.13,257.6 L633.22,263.2 L633.31,259.7 L633.39,266.1 L633.48,257.1 L633.57,264.9 L633.66,260.2 L633.75,263.2 L633.83,262.6 L633.92,261.6 L634.01,258.4 L634.10,264.3 L634.19,269.5 L634.28,260.2 L634.36,258.0 L634.45,264.9 L634.54,262.1 L634.63,265.4 L634.72,266.7 L634.80,264.3 L634.89,264.9 L634.98,264.3 L635.07,260.2 L635.16,264.9 L635.25,261.6 L635.33,260.6 L635.42,258.8 L635.51,268.0 L635.60,262.6 L635.69,268.7 L635.77,263.2 L635.86,267.4 L635.95,271.8 L636.04,262.6 L636.13,265.4 L636.22,270.2 L636.30,262.6 L636.39,263.2 L636.48,266.7 L636.57,268.7 L636.66,264.3 L636.74,266.7 L636.83,272.7 L636.92,264.3 L637.01,268.7 L637.10,264.9 L637.18,266.1 L637.27,271.8 L637.36,266.7 L637.45,265.4 L637.54,271.8 L637.63,271.0 L637.71,265.4 L637.80,264.3 L637.89,266.1 L637.98,271.8 L638.07,263.2 L638.15,271.8 L638.24,268.0 L638.33,266.1 L638.42,269.5 L638.51,265.4 L638.60,271.0 L638.68,271.0 L638.77,270.2 L638.86,268.7 L638.95,259.7 L639.04,269.5 L639.12,270.2 L639.21,263.2 L639.30,265.4 L639.39,269.5 L639.48,265.4 L639.56,262.1 L639.65,276.5 L639.74,274.5 L639.83,267.4 L639.92,271.0 L640.01,268.0 L640.09,275.5 L640.18,272.7 L640.27,272.7 L640.36,272.7 L640.45,275.5 L640.53,269.5 L640.62,266.7 L640.71,268.7 L640.80,279.9 L640.89,272.7 L640.98,276.5 L641.06,272.7 L641.15,279.9 L641.24,273.5 L641.33,272.7 L641.42,278.7 L641.50,274.5 L641.59,272.7 L641.68,271.8 L641.77,274.5 L641.86,273.5 L641.94,268.0 L642.03,285.7 L642.12,276.5 L642.21,273.5 L642.30,274.5 L642.39,274.5 L642.47,271.8 L642.56,277.6 L642.65,274.5 L642.74,272.7 L642.83,266.1 L642.91,272.7 L643.00,270.2 L643.09,271.8 L643.18,268.7 L643.27,277.6 L643.36,271.8 L643.44,278.7 L643.53,277.6 L643.62,270.2 L643.71,271.0 L643.80,275.5 L643.88,282.6 L643.97,276.5 L644.06,276.5 L644.15,266.7 L644.24,273.5 L644.32,270.2 L644.41,278.7 L644.50,268.0 L644.59,275.5 L644.68,275.5 L644.77,279.9 L644.85,278.7 L644.94,274.5 L645.03,279.9 L645.12,278.7 L645.21,279.9 L645.29,284.1 L645.38,281.2 L645.47,274.5 L645.56,282.6 L645.65,279.9 L645.74,271.8 L645.82,272.7 L645.91,278.7 L646.00,271.8 L646.09,285.7 L646.18,278.7 L646.26,278.7 L646.35,279.9 L646.44,278.7 L646.53,278.7 L646.62,277.6 L646.71,278.7 L646.79,273.5 L646.88,284.1 L646.97,274.5 L647.06,277.6 L647.15,275.5 L647.23,284.1 L647.32,277.6 L647.41,282.6 L647.50,278.7 L647.59,285.7 L647.67,285.7 L647.76,276.5 L647.85,279.9 L647.94,281.2 L648.03,277.6 L648.12,282.6 L648.20,284.1 L648.29,296.4 L648.38,284.1 L648.47,282.6 L648.56,276.5 L648.64,282.6 L648.73,275.5 L648.82,274.5 L648.91,285.7 L649.00,299.5 L649.09,281.2 L649.17,277.6 L649.26,276.5 L649.35,284.1 L649.44,279.9 L649.53,287.4 L649.61,281.2 L649.70,275.5 L649.79,282.6 L649.88,277.6 L649.97,284.1 L650.05,282.6 L650.14,282.6 L650.23,281.2 L650.32,287.4 L650.41,284.1 L650.50,279.9 L650.58,282.6 L650.67,275.5 L650.76,279.9 L650.85,281.2 L650.94,287.4 L651.02,282.6 L651.11,293.8 L651.20,282.6 L651.29,284.1 L651.38,284.1 L651.47,284.1 L651.55,282.6 L651.64,287.4 L651.73,284.1 L651.82,293.8 L651.91,282.6 L651.99,285.7 L652.08,289.3 L652.17,285.7 L652.26,281.2 L652.35,282.6 L652.43,285.7 L652.52,291.4 L652.61,289.3 L652.70,287.4 L652.79,281.2 L652.88,285.7 L652.96,287.4 L653.05,276.5 L653.14,291.4 L653.23,296.4 L653.32,278.7 L653.40,285.7 L653.49,282.6 L653.58,293.8 L653.67,287.4 L653.76,289.3 L653.85,279.9 L653.93,296.4 L654.02,282.6 L654.11,289.3 L654.20,291.4 L654.29,289.3 L654.37,287.4 L654.46,289.3 L654.55,287.4 L654.64,296.4 L654.73,282.6 L654.82,287.4 L654.90,281.2 L654.99,287.4 L655.08,287.4 L655.17,296.4 L655.26,279.9 L655.34,285.7 L655.43,293.8 L655.52,287.4 L655.61,285.7 L655.70,303.1 L655.78,287.4 L655.87,285.7 L655.96,287.4 L656.05,285.7 L656.14,285.7 L656.23,293.8 L656.31,282.6 L656.40,289.3 L656.49,299.5 L656.58,293.8 L656.67,293.8 L656.75,293.8 L656.84,289.3 L656.93,285.7 L657.02,279.9 L657.11,291.4 L657.20,313.4 L657.28,287.4 L657.37,293.8 L657.46,287.4 L657.55,291.4 L657.64,299.5 L657.72,299.5 L657.81,296.4 L657.90,281.2 L657.99,281.2 L658.08,303.1 L658.16,289.3 L658.25,293.8 L658.34,291.4 L658.43,296.4 L658.52,307.6 L658.61,313.4 L658.69,296.4 L658.78,291.4 L658.87,296.4 L658.96,287.4 L659.05,291.4 L659.13,289.3 L659.22,296.4 L659.31,307.6 L659.40,277.6 L659.49,282.6 L659.58,293.8 L659.66,296.4 L659.75,303.1 L659.84,303.1 L659.93,285.7 L660.02,289.3 L660.10,293.8 L660.19,285.7 L660.28,296.4 L660.37,289.3 L660.46,293.8 L660.54,287.4 L660.63,289.3 L660.72,307.6 L660.81,296.4 L660.90,299.5 L660.99,293.8 L661.07,287.4 L661.16,299.5 L661.25,303.1 L661.34,293.8 L661.43,307.6 L661.51,287.4 L661.60,296.4 L661.69,289.3 L661.78,291.4 L661.87,299.5 L661.96,296.4 L662.04,287.4 L662.13,293.8 L662.22,293.8 L662.31,291.4 L662.40,299.5 L662.48,296.4 L662.57,296.4 L662.66,296.4 L662.75,287.4 L662.84,299.5 L662.92,299.5 L663.01,293.8 L663.10,296.4 L663.19,296.4 L663.28,285.7 L663.37,289.3 L663.45,291.4 L663.54,296.4 L663.63,287.4 L663.72,307.6 L663.81,296.4 L663.89,281.2 L663.98,299.5 L664.07,293.8 L664.16,296.4 L664.25,299.5 L664.34,296.4 L664.42,296.4 L664.51,299.5 L664.60,289.3 L664.69,313.4 L664.78,299.5 L664.86,291.4 L664.95,303.1 L665.04,296.4 L665.13,291.4 L665.22,293.8 L665.31,289.3 L665.39,303.1 L665.48,303.1 L665.57,291.4 L665.66,289.3 L665.75,307.6 L665.83,299.5 L665.92,307.6 L666.01,299.5 L666.10,284.1 L666.19,282.6 L666.27,321.5 L666.36,296.4 L666.45,291.4 L666.54,299.5 L666.63,289.3 L666.72,293.8 L666.80,303.1 L666.89,307.6 L666.98,303.1 L667.07,299.5 L667.16,293.8 L667.24,303.1 L667.33,287.4 L667.42,296.4 L667.51,307.6 L667.60,321.5 L667.69,293.8 L667.77,296.4 L667.86,291.4 L667.95,296.4 L668.04,296.4 L668.13,303.1 L668.21,299.5 L668.30,291.4 L668.39,289.3 L668.48,285.7 L668.57,296.4 L668.65,303.1 L668.74,296.4 L668.83,303.1 L668.92,299.5 L669.01,293.8 L669.10,303.1 L669.18,321.5 L669.27,299.5 L669.36,291.4 L669.45,291.4 L669.54,296.4 L669.62,296.4 L669.71,291.4 L669.80,313.4 L669.89,303.1 L669.98,307.6 L670.07,299.5 L670.15,303.1 L670.24,299.5 L670.33,291.4 L670.42,303.1 L670.51,289.3 L670.59,299.5 L670.68,289.3 L670.77,296.4 L670.86,299.5 L670.95,307.6 L671.03,303.1 L671.12,291.4 L671.21,307.6 L671.30,296.4 L671.39,321.5 L671.48,299.5 L671.56,303.1 L671.65,313.4 L671.74,296.4 L671.83,313.4 L671.92,303.1 L672.00,303.1 L672.09,296.4 L672.18,303.1 L672.27,291.4 L672.36,293.8 L672.45,293.8 L672.53,293.8 L672.62,307.6 L672.71,299.5 L672.80,303.1 L672.89,296.4 L672.97,321.5 L673.06,303.1 L673.15,307.6 L673.24,307.6 L673.33,291.4 L673.41,303.1 L673.50,289.3 L673.59,307.6 L673.68,291.4 L673.77,303.1 L673.86,291.4 L673.94,313.4 L674.03,291.4 L674.12,307.6 L674.21,287.4 L674.30,291.4 L674.38,303.1 L674.47,303.1 L674.56,307.6 L674.65,291.4 L674.74,313.4 L674.83,293.8 L674.91,313.4 L675.00,296.4 L675.09,296.4 L675.18,313.4 L675.27,303.1 L675.35,296.4 L675.44,293.8 L675.53,289.3 L675.62,313.4 L675.71,293.8 L675.80,303.1 L675.88,289.3 L675.97,321.5 L676.06,291.4 L676.15,299.5 L676.24,303.1 L676.32,335.3 L676.41,307.6 L676.50,313.4 L676.59,289.3 L676.68,293.8 L676.76,291.4 L676.85,299.5 L676.94,303.1 L677.03,303.1 L677.12,303.1 L677.21,296.4 L677.29,299.5 L677.38,296.4 L677.47,307.6 L677.56,299.5 L677.65,303.1 L677.73,313.4 L677.82,289.3 L677.91,303.1 L678.00,307.6 L678.09,293.8 L678.18,291.4 L678.26,291.4 L678.35,321.5 L678.44,307.6 L678.53,293.8 L678.62,291.4 L678.70,293.8 L678.79,291.4 L678.88,299.5 L678.97,291.4 L679.06,289.3 L679.14,335.3 L679.23,289.3 L679.32,307.6 L679.41,291.4 L679.50,299.5 L679.59,303.1 L679.67,303.1 L679.76,299.5 L679.85,299.5 L679.94,299.5 L680.03,321.5 L680.11,303.1 L680.20,307.6 L680.29,313.4 L680.38,307.6 L680.47,321.5 L680.56,289.3 L680.64,299.5 L680.73,303.1 L680.82,307.6 L680.91,303.1 L681.00,293.8 L681.08,303.1 L681.17,293.8 L681.26,299.5 L681.35,313.4 L681.44,287.4 L681.52,313.4 L681.61,291.4 L681.70,307.6 L681.79,307.6 L681.88,321.5 L681.97,335.3 L682.05,313.4 L682.14,307.6 L682.23,299.5 L682.32,291.4 L682.41,307.6 L682.49,303.1 L682.58,307.6 L682.67,299.5 L682.76,293.8 L682.85,307.6 L682.94,296.4 L683.02,303.1 L683.11,289.3 L683.20,303.1 L683.29,289.3 L683.38,307.6 L683.46,291.4 L683.55,321.5 L683.64,291.4 L683.73,299.5 L683.82,313.4 L683.90,303.1 L683.99,299.5 L684.08,299.5 L684.17,313.4 L684.26,307.6 L684.35,335.3 L684.43,307.6 L684.52,296.4 L684.61,307.6 L684.70,303.1 L684.79,299.5 L684.87,303.1 L684.96,299.5 L685.05,291.4 L685.14,289.3 L685.23,296.4 L685.32,321.5 L685.40,299.5 L685.49,321.5 L685.58,291.4 L685.67,299.5 L685.76,293.8 L685.84,321.5 L685.93,303.1 L686.02,313.4 L686.11,299.5 L686.20,307.6 L686.29,307.6 L686.37,307.6 L686.46,313.4 L686.55,299.5 L686.64,296.4 L686.73,296.4 L686.81,303.1 L686.90,299.5 L686.99,313.4 L687.08,296.4 L687.17,307.6 L687.25,303.1 L687.34,307.6 L687.43,303.1 L687.52,296.4 L687.61,307.6 L687.70,307.6 L687.78,299.5 L687.87,293.8 L687.96,303.1 L688.05,291.4 L688.14,289.3 L688.22,296.4 L688.31,303.1 L688.40,299.5 L688.49,335.3 L688.58,313.4 L688.67,335.3 L688.75,313.4 L688.84,303.1 L688.93,313.4 L689.02,321.5 L689.11,303.1 L689.19,296.4 L689.28,307.6 L689.37,299.5 L689.46,321.5 L689.55,296.4 L689.63,291.4 L689.72,307.6 L689.81,303.1 L689.90,321.5 L689.99,293.8 L690.08,307.6 L690.16,291.4 L690.25,303.1 L690.34,299.5 L690.43,299.5 L690.52,313.4 L690.60,303.1 L690.69,299.5 L690.78,307.6 L690.87,296.4 L690.96,293.8 L691.05,313.4 L691.13,303.1 L691.22,299.5 L691.31,291.4 L691.40,299.5 L691.49,299.5 L691.57,307.6 L691.66,307.6 L691.75,313.4 L691.84,299.5 L691.93,299.5 L692.01,296.4 L692.10,296.4 L692.19,307.6 L692.28,303.1 L692.37,321.5 L692.46,303.1 L692.54,303.1 L692.63,303.1 L692.72,307.6 L692.81,303.1 L692.90,303.1 L692.98,307.6 L693.07,307.6 L693.16,299.5 L693.25,293.8 L693.34,335.3 L693.43,303.1 L693.51,303.1 L693.60,307.6 L693.69,296.4 L693.78,313.4 L693.87,299.5 L693.95,293.8 L694.04,296.4 L694.13,307.6 L694.22,303.1 L694.31,307.6 L694.40,303.1 L694.48,303.1 L694.57,303.1 L694.66,307.6 L694.75,307.6 L694.84,313.4 L694.92,303.1 L695.01,299.5 L695.10,293.8 L695.19,303.1 L695.28,303.1 L695.36,296.4 L695.45,303.1 L695.54,307.6 L695.63,321.5 L695.72,335.3 L695.81,321.5 L695.89,291.4 L695.98,307.6 L696.07,307.6 L696.16,299.5 L696.25,289.3 L696.33,321.5 L696.42,313.4 L696.51,296.4 L696.60,307.6 L696.69,321.5 L696.78,303.1 L696.86,303.1 L696.95,313.4 L697.04,307.6 L697.13,299.5 L697.22,335.3 L697.30,307.6 L697.39,307.6 L697.48,321.5 L697.57,321.5 L697.66,299.5 L697.74,291.4 L697.83,296.4 L697.92,303.1 L698.01,307.6 L698.10,313.4 L698.19,313.4 L698.27,303.1 L698.36,307.6 L698.45,303.1 L698.54,307.6 L698.63,321.5 L698.71,313.4 L698.80,296.4 L698.89,313.4 L698.98,299.5 L699.07,296.4 L699.16,287.4 L699.24,313.4 L699.33,293.8 L699.42,313.4 L699.51,296.4 L699.60,299.5 L699.68,299.5 L699.77,296.4 L699.86,299.5 L699.95,307.6 L700.04,303.1 L700.12,291.4 L700.21,289.3 L700.30,321.5 L700.39,313.4 L700.48,296.4 L700.57,291.4 L700.65,303.1 L700.74,303.1 L700.83,313.4 L700.92,296.4 L701.01,313.4 L701.09,313.4 L701.18,299.5 L701.27,299.5 L701.36,299.5 L701.45,307.6 L701.54,296.4 L701.62,347.5 L701.71,303.1 L701.80,303.1 L701.89,296.4 L701.98,307.6 L702.06,299.5 L702.15,303.1 L702.24,303.1 L702.33,293.8 L702.42,291.4 L702.50,307.6 L702.59,299.5 L702.68,299.5 L702.77,321.5 L702.86,313.4 L702.95,321.5 L703.03,335.3 L703.12,313.4 L703.21,307.6 L703.30,335.3 L703.39,307.6 L703.47,293.8 L703.56,307.6 L703.65,303.1 L703.74,347.5 L703.83,321.5 L703.92,313.4 L704.00,303.1 L704.09,299.5 L704.18,313.4 L704.27,299.5 L704.36,307.6 L704.44,299.5 L704.53,303.1 L704.62,307.6 L704.71,299.5 L704.80,303.1 L704.89,299.5 L704.97,307.6 L705.06,313.4 L705.15,299.5 L705.24,299.5 L705.33,296.4 L705.41,296.4 L705.50,313.4 L705.59,307.6 L705.68,296.4 L705.77,321.5 L705.85,307.6 L705.94,313.4 L706.03,307.6 L706.12,303.1 L706.21,335.3 L706.30,313.4 L706.38,299.5 L706.47,307.6 L706.56,303.1 L706.65,307.6 L706.74,293.8 L706.82,299.5 L706.91,299.5 L707.00,293.8 L707.09,313.4 L707.18,307.6 L707.27,313.4 L707.35,307.6 L707.44,321.5 L707.53,321.5 L707.62,285.7 L707.71,293.8 L707.79,287.4 L707.88,307.6 L707.97,307.6 L708.06,307.6 L708.15,313.4 L708.23,313.4 L708.32,299.5 L708.41,307.6 L708.50,321.5 L708.59,335.3 L708.68,293.8 L708.76,307.6 L708.85,303.1 L708.94,313.4 L709.03,299.5 L709.12,299.5 L709.20,321.5 L709.29,321.5 L709.38,299.5 L709.47,299.5 L709.56,303.1 L709.65,299.5 L709.73,335.3 L709.82,307.6 L709.91,303.1 L710.00,293.8 L710.09,313.4 L710.17,313.4 L710.26,299.5 L710.35,321.5 L710.44,347.5 L710.53,307.6 L710.61,321.5 L710.70,307.6 L710.79,313.4 L710.88,307.6 L710.97,307.6 L711.06,293.8 L711.14,296.4 L711.23,321.5 L711.32,296.4 L711.41,293.8 L711.50,303.1 L711.58,303.1 L711.67,299.5 L711.76,321.5 L711.85,296.4 L711.94,321.5 L712.03,303.1 L712.11,313.4 L712.20,303.1 L712.29,307.6 L712.38,299.5 L712.47,299.5 L712.55,307.6 L712.64,303.1 L712.73,293.8 L712.82,289.3 L712.91,313.4 L713.00,307.6 L713.08,321.5 L713.17,299.5 L713.26,307.6 L713.35,303.1 L713.44,303.1 L713.52,313.4 L713.61,321.5 L713.70,321.5 L713.79,347.5 L713.88,296.4 L713.96,335.3 L714.05,299.5 L714.14,299.5 L714.23,321.5 L714.32,307.6 L714.41,313.4 L714.49,335.3 L714.58,307.6 L714.67,307.6 L714.76,321.5 L714.85,313.4 L714.93,296.4 L715.02,313.4 L715.11,299.5 L715.20,289.3 L715.29,335.3 L715.38,296.4 L715.46,293.8 L715.55,299.5 L715.64,285.7 L715.73,303.1 L715.82,321.5 L715.90,321.5 L715.99,307.6 L716.08,313.4 L716.17,303.1 L716.26,303.1 L716.34,303.1 L716.43,313.4 L716.52,303.1 L716.61,313.4 L716.70,307.6 L716.79,303.1 L716.87,289.3 L716.96,313.4 L717.05,293.8 L717.14,335.3 L717.23,299.5 L717.31,321.5 L717.40,299.5 L717.49,321.5 L717.58,299.5 L717.67,313.4 L717.76,313.4 L717.84,321.5 L717.93,321.5 L718.02,313.4 L718.11,293.8 L718.20,303.1 L718.28,303.1 L718.37,313.4 L718.46,296.4 L718.55,303.1 L718.64,321.5 L718.72,296.4 L718.81,347.5 L718.90,299.5 L718.99,299.5 L719.08,299.5 L719.17,313.4 L719.25,321.5 L719.34,307.6 L719.43,313.4 L719.52,313.4 L719.61,291.4 L719.69,307.6 L719.78,313.4 L719.87,321.5 L719.96,303.1 L720.05,299.5 L720.14,321.5 L720.22,287.4 L720.31,303.1 L720.40,296.4 L720.49,313.4 L720.58,299.5 L720.66,321.5 L720.75,307.6 L720.84,307.6 L720.93,307.6 L721.02,313.4 L721.10,303.1 L721.19,293.8 L721.28,303.1 L721.37,307.6 L721.46,303.1 L721.55,307.6 L721.63,303.1 L721.72,321.5 L721.81,307.6 L721.90,313.4 L721.99,299.5 L722.07,307.6 L722.16,291.4 L722.25,307.6 L722.34,303.1 L722.43,293.8 L722.52,303.1 L722.60,303.1 L722.69,303.1 L722.78,313.4 L722.87,296.4 L722.96,335.3 L723.04,299.5 L723.13,296.4 L723.22,313.4 L723.31,313.4 L723.40,313.4 L723.49,299.5 L723.57,313.4 L723.66,307.6 L723.75,335.3 L723.84,307.6 L723.93,296.4 L724.01,321.5 L724.10,321.5 L724.19,303.1 L724.28,299.5 L724.37,296.4 L724.45,299.5 L724.54,321.5 L724.63,303.1 L724.72,313.4 L724.81,313.4 L724.90,293.8 L724.98,296.4 L725.07,303.1 L725.16,296.4 L725.25,335.3 L725.34,296.4 L725.42,299.5 L725.51,321.5 L725.60,303.1 L725.69,307.6 L725.78,313.4 L725.87,303.1 L725.95,303.1 L726.04,299.5 L726.13,321.5 L726.22,335.3 L726.31,307.6 L726.39,307.6 L726.48,321.5 L726.57,303.1 L726.66,313.4 L726.75,299.5 L726.83,307.6 L726.92,321.5 L727.01,296.4 L727.10,313.4 L727.19,307.6 L727.28,307.6 L727.36,321.5 L727.45,293.8 L727.54,293.8 L727.63,296.4 L727.72,293.8 L727.80,296.4 L727.89,299.5 L727.98,307.6 L728.07,299.5 L728.16,307.6 L728.25,303.1 L728.33,313.4 L728.42,299.5 L728.51,313.4 L728.60,321.5 L728.69,313.4 L728.77,299.5 L728.86,321.5 L728.95,299.5 L729.04,313.4 L729.13,303.1 L729.21,293.8 L729.30,289.3 L729.39,313.4 L729.48,307.6 L729.57,307.6 L729.66,299.5 L729.74,299.5 L729.83,299.5 L729.92,303.1 L730.01,321.5 L730.10,299.5 L730.18,303.1 L730.27,303.1 L730.36,321.5 L730.45,287.4 L730.54,303.1 L730.63,303.1 L730.71,307.6 L730.80,303.1 L730.89,303.1 L730.98,296.4 L731.07,296.4 L731.15,307.6 L731.24,335.3 L731.33,307.6 L731.42,299.5 L731.51,313.4 L731.59,299.5 L731.68,307.6 L731.77,299.5 L731.86,313.4 L731.95,313.4 L732.04,313.4 L732.12,335.3 L732.21,313.4 L732.30,335.3 L732.39,307.6 L732.48,313.4 L732.56,299.5 L732.65,303.1 L732.74,303.1 L732.83,313.4 L732.92,313.4 L733.01,321.5 L733.09,296.4 L733.18,303.1 L733.27,313.4 L733.36,303.1 L733.45,299.5 L733.53,321.5 L733.62,307.6 L733.71,321.5 L733.80,293.8 L733.89,313.4 L733.98,299.5 L734.06,296.4 L734.15,299.5 L734.24,303.1 L734.33,307.6 L734.42,299.5 L734.50,296.4 L734.59,303.1 L734.68,313.4 L734.77,307.6 L734.86,293.8 L734.94,296.4 L735.03,321.5 L735.12,299.5 L735.21,293.8 L735.30,321.5 L735.39,307.6 L735.47,313.4 L735.56,307.6 L735.65,321.5 L735.74,313.4 L735.83,303.1 L735.91,335.3 L736.00,307.6 L736.09,291.4 L736.18,293.8 L736.27,296.4 L736.36,299.5 L736.44,313.4 L736.53,335.3 L736.62,307.6 L736.71,296.4 L736.80,313.4 L736.88,321.5 L736.97,303.1 L737.06,299.5 L737.15,321.5 L737.24,307.6 L737.32,321.5 L737.41,313.4 L737.50,296.4 L737.59,321.5 L737.68,321.5 L737.77,307.6 L737.85,307.6 L737.94,307.6 L738.03,313.4 L738.12,321.5 L738.21,299.5 L738.29,307.6 L738.38,313.4 L738.47,321.5 L738.56,321.5 L738.65,299.5 L738.74,293.8 L738.82,303.1 L738.91,291.4 L739.00,307.6 L739.09,307.6 L739.18,321.5 L739.26,303.1 L739.35,313.4 L739.44,303.1 L739.53,321.5 L739.62,313.4 L739.70,321.5 L739.79,307.6 L739.88,321.5 L739.97,307.6 L740.06,299.5 L740.15,313.4 L740.23,313.4 L740.32,303.1 L740.41,291.4 L740.50,307.6 L740.59,303.1 L740.67,285.7 L740.76,296.4 L740.85,321.5 L740.94,313.4 L741.03,307.6 L741.12,299.5 L741.20,296.4 L741.29,293.8 L741.38,303.1 L741.47,313.4 L741.56,299.5 L741.64,303.1 L741.73,303.1 L741.82,296.4 L741.91,335.3 L742.00,303.1 L742.09,313.4 L742.17,303.1 L742.26,335.3 L742.35,313.4 L742.44,313.4 L742.53,299.5 L742.61,313.4 L742.70,313.4 L742.79,313.4 L742.88,303.1 L742.97,289.3 L743.05,313.4 L743.14,313.4 L743.23,296.4 L743.32,303.1 L743.41,335.3 L743.50,313.4 L743.58,307.6 L743.67,299.5 L743.76,293.8 L743.85,303.1 L743.94,299.5 L744.02,296.4 L744.11,289.3 L744.20,307.6 L744.29,307.6 L744.38,307.6 L744.47,313.4 L744.55,296.4 L744.64,307.6 L744.73,347.5 L744.82,303.1 L744.91,313.4 L744.99,303.1 L745.08,303.1 L745.17,303.1 L745.26,296.4 L745.35,313.4 L745.43,293.8 L745.52,299.5 L745.61,335.3 L745.70,321.5 L745.79,313.4 L745.88,291.4 L745.96,307.6 L746.05,321.5 L746.14,321.5 L746.23,307.6 L746.32,335.3 L746.40,303.1 L746.49,321.5 L746.58,313.4 L746.67,303.1 L746.76,335.3 L746.85,307.6 L746.93,307.6 L747.02,291.4 L747.11,307.6 L747.20,313.4 L747.29,299.5 L747.37,335.3 L747.46,313.4 L747.55,303.1 L747.64,299.5 L747.73,321.5 L747.81,335.3 L747.90,307.6 L747.99,299.5 L748.08,313.4 L748.17,296.4 L748.26,313.4 L748.34,299.5 L748.43,313.4 L748.52,303.1 L748.61,307.6 L748.70,293.8 L748.78,293.8 L748.87,303.1 L748.96,296.4 L749.05,307.6 L749.14,296.4 L749.23,303.1 L749.31,296.4 L749.40,307.6 L749.49,299.5 L749.58,313.4 L749.67,347.5 L749.75,303.1 L749.84,303.1 L749.93,296.4 L750.02,307.6 L750.11,299.5 L750.19,313.4 L750.28,307.6 L750.37,307.6 L750.46,303.1 L750.55,321.5 L750.64,347.5 L750.72,303.1 L750.81,303.1 L750.90,313.4 L750.99,307.6 L751.08,313.4 L751.16,303.1 L751.25,299.5 L751.34,303.1 L751.43,303.1 L751.52,303.1 L751.61,303.1 L751.69,307.6 L751.78,307.6 L751.87,313.4 L751.96,313.4 L752.05,293.8 L752.13,299.5 L752.22,313.4 L752.31,321.5 L752.40,296.4 L752.49,299.5 L752.58,299.5 L752.66,307.6 L752.75,313.4 L752.84,313.4 L752.93,307.6 L753.02,303.1 L753.10,321.5 L753.19,307.6 L753.28,303.1 L753.37,321.5 L753.46,296.4 L753.54,313.4 L753.63,289.3 L753.72,307.6 L753.81,313.4 L753.90,321.5 L753.99,307.6 L754.07,293.8 L754.16,313.4 L754.25,307.6 L754.34,293.8 L754.43,291.4 L754.51,299.5 L754.60,303.1 L754.69,307.6 L754.78,299.5 L754.87,303.1 L754.96,321.5 L755.04,313.4 L755.13,313.4 L755.22,321.5 L755.31,293.8 L755.40,303.1 L755.48,299.5 L755.57,296.4 L755.66,296.4 L755.75,307.6 L755.84,299.5 L755.92,296.4 L756.01,303.1 L756.10,313.4 L756.19,321.5 L756.28,307.6 L756.37,303.1 L756.45,293.8 L756.54,307.6 L756.63,321.5 L756.72,287.4 L756.81,313.4 L756.89,307.6 L756.98,296.4 L757.07,321.5 L757.16,313.4 L757.25,293.8 L757.34,335.3 L757.42,307.6 L757.51,307.6 L757.60,313.4 L757.69,313.4 L757.78,307.6 L757.86,303.1 L757.95,303.1 L758.04,321.5 L758.13,296.4 L758.22,313.4 L758.30,313.4 L758.39,296.4 L758.48,303.1 L758.57,303.1 L758.66,307.6 L758.75,299.5 L758.83,307.6 L758.92,321.5 L759.01,313.4 L759.10,299.5 L759.19,313.4 L759.27,303.1 L759.36,307.6 L759.45,303.1 L759.54,307.6 L759.63,307.6 L759.72,313.4 L759.80,293.8 L759.89,299.5 L759.98,347.5 L760.07,299.5 L760.16,335.3 L760.24,321.5 L760.33,293.8 L760.42,307.6 L760.51,313.4 L760.60,299.5 L760.68,303.1 L760.77,303.1 L760.86,299.5 L760.95,313.4 L761.04,313.4 L761.13,321.5 L761.21,296.4 L761.30,307.6 L761.39,335.3 L761.48,313.4 L761.57,307.6 L761.65,299.5 L761.74,296.4 L761.83,313.4 L761.92,313.4 L762.01,303.1 L762.10,299.5 L762.18,307.6 L762.27,335.3 L762.36,307.6 L762.45,313.4 L762.54,299.5 L762.62,307.6 L762.71,313.4 L762.80,321.5 L762.89,335.3 L762.98,307.6 L763.07,313.4 L763.15,313.4 L763.24,299.5 L763.33,299.5 L763.42,299.5 L763.51,307.6 L763.59,313.4 L763.68,303.1 L763.77,307.6 L763.86,293.8 L763.95,313.4 L764.03,296.4 L764.12,293.8 L764.21,303.1 L764.30,307.6 L764.39,307.6 L764.48,299.5 L764.56,347.5 L764.65,303.1 L764.74,299.5 L764.83,303.1 L764.92,293.8 L765.00,347.5 L765.09,284.1 L765.18,303.1 L765.27,303.1 L765.36,303.1 L765.45,299.5 L765.53,299.5 L765.62,296.4 L765.71,313.4 L765.80,293.8 L765.89,303.1 L765.97,293.8 L766.06,307.6 L766.15,299.5 L766.24,321.5 L766.33,335.3 L766.41,307.6 L766.50,296.4 L766.59,307.6 L766.68,296.4 L766.77,303.1 L766.86,299.5 L766.94,307.6 L767.03,296.4 L767.12,299.5 L767.21,307.6 L767.30,303.1 L767.38,303.1 L767.47,307.6 L767.56,303.1 L767.65,303.1 L767.74,313.4 L767.83,293.8 L767.91,303.1 L768.00,296.4 L768.09,335.3 L768.18,313.4 L768.27,307.6 L768.35,296.4 L768.44,313.4 L768.53,293.8 L768.62,307.6 L768.71,335.3 L768.79,335.3 L768.88,307.6 L768.97,313.4 L769.06,321.5 L769.15,313.4 L769.24,303.1 L769.32,321.5 L769.41,307.6 L769.50,335.3 L769.59,299.5 L769.68,307.6 L769.76,335.3 L769.85,296.4 L769.94,296.4 L770.03,299.5 L770.12,307.6 L770.21,296.4 L770.29,303.1 L770.38,303.1 L770.47,307.6 L770.56,313.4 L770.65,307.6 L770.73,303.1 L770.82,296.4 L770.91,321.5 L771.00,313.4 L771.09,307.6 L771.17,299.5 L771.26,293.8 L771.35,313.4 L771.44,303.1 L771.53,299.5 L771.62,307.6 L771.70,299.5 L771.79,307.6 L771.88,313.4 L771.97,321.5 L772.06,307.6 L772.14,296.4 L772.23,321.5 L772.32,335.3 L772.41,307.6 L772.50,303.1 L772.59,307.6 L772.67,285.7 L772.76,299.5 L772.85,307.6 L772.94,321.5 L773.03,303.1 L773.11,313.4 L773.20,287.4 L773.29,303.1 L773.38,313.4 L773.47,299.5 L773.56,299.5 L773.64,303.1 L773.73,289.3 L773.82,307.6 L773.91,289.3 L774.00,321.5 L774.08,321.5 L774.17,307.6 L774.26,321.5 L774.35,313.4 L774.44,303.1 L774.52,307.6 L774.61,321.5 L774.70,313.4 L774.79,321.5 L774.88,303.1 L774.97,299.5 L775.05,293.8 L775.14,313.4 L775.23,296.4 L775.32,307.6 L775.41,307.6 L775.49,313.4 L775.58,307.6 L775.67,299.5 L775.76,321.5 L775.85,303.1 L775.94,321.5 L776.02,303.1 L776.11,299.5 L776.20,293.8 L776.29,307.6 L776.38,321.5 L776.46,296.4 L776.55,303.1 L776.64,293.8 L776.73,291.4 L776.82,313.4 L776.90,335.3 L776.99,299.5 L777.08,296.4 L777.17,307.6 L777.26,299.5 L777.35,287.4 L777.43,299.5 L777.52,299.5 L777.61,303.1 L777.70,303.1 L777.79,307.6 L777.87,299.5 L777.96,303.1 L778.05,299.5 L778.14,291.4 L778.23,303.1 L778.32,307.6 L778.40,293.8 L778.49,307.6 L778.58,313.4 L778.67,313.4 L778.76,347.5 L778.84,299.5 L778.93,307.6 L779.02,335.3 L779.11,303.1 L779.20,303.1 L779.28,307.6 L779.37,303.1 L779.46,296.4 L779.55,299.5 L779.64,307.6 L779.73,321.5 L779.81,299.5 L779.90,335.3 L779.99,293.8 L780.08,313.4 L780.17,313.4 L780.25,299.5 L780.34,303.1 L780.43,303.1 L780.52,307.6 L780.61,307.6 L780.70,321.5 L780.78,287.4 L780.87,321.5 L780.96,303.1 L781.05,307.6 L781.14,313.4 L781.22,296.4 L781.31,307.6 L781.40,307.6 L781.49,303.1 L781.58,321.5 L781.67,335.3 L781.75,313.4 L781.84,299.5 L781.93,307.6 L782.02,313.4 L782.11,307.6 L782.19,321.5 L782.28,307.6 L782.37,307.6 L782.46,307.6 L782.55,313.4 L782.63,296.4 L782.72,299.5 L782.81,313.4 L782.90,321.5 L782.99,299.5 L783.08,296.4 L783.16,299.5 L783.25,347.5 L783.34,303.1 L783.43,303.1 L783.52,303.1 L783.60,307.6 L783.69,293.8 L783.78,335.3 L783.87,313.4 L783.96,299.5 L784.05,313.4 L784.13,335.3 L784.22,313.4 L784.31,307.6 L784.40,313.4 L784.49,307.6 L784.57,321.5 L784.66,293.8 L784.75,291.4 L784.84,313.4 L784.93,303.1 L785.01,307.6 L785.10,293.8 L785.19,307.6 L785.28,299.5 L785.37,291.4 L785.46,313.4 L785.54,299.5 L785.63,313.4 L785.72,307.6 L785.81,296.4 L785.90,291.4 L785.98,291.4 L786.07,291.4 L786.16,313.4 L786.25,299.5 L786.34,293.8 L786.43,296.4 L786.51,307.6 L786.60,307.6 L786.69,321.5 L786.78,293.8 L786.87,313.4 L786.95,299.5 L787.04,296.4 L787.13,307.6 L787.22,296.4 L787.31,303.1 L787.39,299.5 L787.48,307.6 L787.57,296.4 L787.66,296.4 L787.75,307.6 L787.84,307.6 L787.92,291.4 L788.01,313.4 L788.10,307.6 L788.19,313.4 L788.28,321.5 L788.36,293.8 L788.45,307.6 L788.54,296.4 L788.63,299.5 L788.72,313.4 L788.81,299.5 L788.89,307.6 L788.98,321.5 L789.07,299.5 L789.16,321.5 L789.25,313.4 L789.33,299.5 L789.42,303.1 L789.51,313.4 L789.60,296.4 L789.69,313.4 L789.77,296.4 L789.86,313.4 L789.95,299.5 L790.04,313.4 L790.13,296.4 L790.22,303.1 L790.30,307.6 L790.39,303.1 L790.48,296.4 L790.57,321.5 L790.66,296.4 L790.74,299.5 L790.83,321.5 L790.92,291.4 L791.01,303.1 L791.10,321.5 L791.19,299.5 L791.27,321.5 L791.36,296.4 L791.45,303.1 L791.54,321.5 L791.63,321.5 L791.71,299.5 L791.80,303.1 L791.89,321.5 L791.98,296.4 L792.07,299.5 L792.16,335.3 L792.24,299.5 L792.33,307.6 L792.42,313.4 L792.51,303.1 L792.60,307.6 L792.68,321.5 L792.77,303.1 L792.86,321.5 L792.95,313.4 L793.04,321.5 L793.12,291.4 L793.21,321.5 L793.30,291.4 L793.39,321.5 L793.48,307.6 L793.57,299.5 L793.65,303.1 L793.74,299.5 L793.83,321.5 L793.92,307.6 L794.01,307.6 L794.09,293.8 L794.18,313.4 L794.27,303.1 L794.36,299.5 L794.45,299.5 L794.54,307.6 L794.62,313.4 L794.71,303.1 L794.80,321.5 L794.89,299.5 L794.98,313.4 L795.06,299.5 L795.15,307.6 L795.24,313.4 L795.33,296.4 L795.42,299.5 L795.50,303.1 L795.59,335.3 L795.68,307.6 L795.77,307.6 L795.86,307.6 L795.95,287.4 L796.03,303.1 L796.12,313.4 L796.21,299.5 L796.30,299.5 L796.39,299.5 L796.47,307.6 L796.56,303.1 L796.65,321.5 L796.74,313.4 L796.83,307.6 L796.92,299.5 L797.00,299.5 L797.09,303.1 L797.18,313.4 L797.27,313.4 L797.36,303.1 L797.44,313.4 L797.53,299.5 L797.62,307.6 L797.71,307.6 L797.80,321.5 L797.88,299.5 L797.97,307.6 L798.06,307.6 L798.15,299.5 L798.24,285.7 L798.33,303.1 L798.41,313.4 L798.50,307.6 L798.59,321.5 L798.68,307.6 L798.77,299.5 L798.85,313.4 L798.94,293.8 L799.03,335.3 L799.12,299.5 L799.21,307.6 L799.30,299.5 L799.38,321.5 L799.47,313.4 L799.56,307.6 L799.65,313.4 L799.74,296.4 L799.82,299.5 L799.91,313.4 L800.00,293.8 L800.09,307.6 L800.18,321.5 L800.26,291.4 L800.35,293.8 L800.44,299.5 L800.53,321.5 L800.62,303.1 L800.71,321.5 L800.79,299.5 L800.88,335.3 L800.97,307.6 L801.06,307.6 L801.15,303.1 L801.23,293.8 L801.32,307.6 L801.41,303.1 L801.50,307.6 L801.59,307.6 L801.68,296.4 L801.76,299.5 L801.85,296.4 L801.94,296.4 L802.03,321.5 L802.12,335.3 L802.20,299.5 L802.29,313.4 L802.38,313.4 L802.47,313.4 L802.56,289.3 L802.65,299.5 L802.73,289.3 L802.82,307.6 L802.91,303.1 L803.00,303.1 L803.09,296.4 L803.17,307.6 L803.26,335.3 L803.35,285.7 L803.44,296.4 L803.53,347.5 L803.61,335.3 L803.70,299.5 L803.79,299.5 L803.88,296.4 L803.97,303.1 L804.06,303.1 L804.14,313.4 L804.23,307.6 L804.32,291.4 L804.41,307.6 L804.50,307.6 L804.58,321.5 L804.67,303.1 L804.76,303.1 L804.85,303.1 L804.94,313.4 L805.03,303.1 L805.11,307.6 L805.20,296.4 L805.29,307.6 L805.38,307.6 L805.47,307.6 L805.55,296.4 L805.64,307.6 L805.73,313.4 L805.82,321.5 L805.91,313.4 L805.99,313.4 L806.08,313.4 L806.17,335.3 L806.26,303.1 L806.35,303.1 L806.44,293.8 L806.52,307.6 L806.61,293.8 L806.70,313.4 L806.79,303.1 L806.88,299.5 L806.96,291.4 L807.05,307.6 L807.14,296.4 L807.23,313.4 L807.32,307.6 L807.41,291.4 L807.49,307.6 L807.58,313.4 L807.67,296.4 L807.76,313.4 L807.85,291.4 L807.93,313.4 L808.02,307.6 L808.11,296.4 L808.20,303.1 L808.29,321.5 L808.37,313.4 L808.46,303.1 L808.55,303.1 L808.64,299.5 L808.73,307.6 L808.82,303.1 L808.90,313.4 L808.99,299.5 L809.08,321.5 L809.17,335.3 L809.26,307.6 L809.34,296.4 L809.43,313.4 L809.52,307.6 L809.61,296.4 L809.70,293.8 L809.79,303.1 L809.87,313.4 L809.96,293.8 L810.05,313.4 L810.14,307.6 L810.23,291.4 L810.31,299.5 L810.40,299.5 L810.49,313.4 L810.58,307.6 L810.67,303.1 L810.76,313.4 L810.84,307.6 L810.93,303.1 L811.02,303.1 L811.11,303.1 L811.20,307.6 L811.28,299.5 L811.37,293.8 L811.46,303.1 L811.55,307.6 L811.64,313.4 L811.72,296.4 L811.81,307.6 L811.90,293.8 L811.99,321.5 L812.08,313.4 L812.17,303.1 L812.25,313.4 L812.34,303.1 L812.43,303.1 L812.52,293.8 L812.61,296.4 L812.69,303.1 L812.78,313.4 L812.87,321.5 L812.96,299.5 L813.05,335.3 L813.14,313.4 L813.22,313.4 L813.31,299.5 L813.40,313.4 L813.49,299.5 L813.58,313.4 L813.66,296.4 L813.75,293.8 L813.84,307.6 L813.93,307.6 L814.02,299.5 L814.10,321.5 L814.19,313.4 L814.28,307.6 L814.37,307.6 L814.46,303.1 L814.55,303.1 L814.63,307.6 L814.72,293.8 L814.81,299.5 L814.90,299.5 L814.99,313.4 L815.07,299.5 L815.16,303.1 L815.25,307.6 L815.34,293.8 L815.43,307.6 L815.52,299.5 L815.60,313.4 L815.69,303.1 L815.78,313.4 L815.87,293.8 L815.96,296.4 L816.04,321.5 L816.13,303.1 L816.22,293.8 L816.31,299.5 L816.40,296.4 L816.48,299.5 L816.57,321.5 L816.66,313.4 L816.75,303.1 L816.84,291.4 L816.93,296.4 L817.01,321.5 L817.10,299.5 L817.19,335.3 L817.28,299.5 L817.37,313.4 L817.45,321.5 L817.54,335.3 L817.63,307.6 L817.72,307.6 L817.81,299.5 L817.90,299.5 L817.98,307.6 L818.07,291.4 L818.16,321.5 L818.25,313.4 L818.34,293.8 L818.42,321.5 L818.51,321.5 L818.60,296.4 L818.69,307.6 L818.78,307.6 L818.86,307.6 L818.95,303.1 L819.04,299.5 L819.13,313.4 L819.22,299.5 L819.31,299.5 L819.39,307.6 L819.48,299.5 L819.57,313.4 L819.66,293.8 L819.75,303.1 L819.83,321.5 L819.92,293.8 L820.01,335.3 L820.10,303.1 L820.19,307.6 L820.28,303.1 L820.36,313.4 L820.45,299.5 L820.54,299.5 L820.63,307.6 L820.72,321.5 L820.80,303.1 L820.89,303.1 L820.98,303.1 L821.07,321.5 L821.16,291.4 L821.25,299.5 L821.33,313.4 L821.42,321.5 L821.51,303.1 L821.60,303.1 L821.69,299.5 L821.77,313.4 L821.86,293.8 L821.95,299.5 L822.04,313.4 L822.13,321.5 L822.21,307.6 L822.30,321.5 L822.39,303.1 L822.48,291.4 L822.57,299.5 L822.66,299.5 L822.74,335.3 L822.83,321.5 L822.92,307.6 L823.01,303.1 L823.10,307.6 L823.18,313.4 L823.27,321.5 L823.36,321.5 L823.45,321.5 L823.54,313.4 L823.63,313.4 L823.71,293.8 L823.80,313.4 L823.89,299.5 L823.98,313.4 L824.07,303.1 L824.15,313.4 L824.24,299.5 L824.33,296.4 L824.42,335.3 L824.51,293.8 L824.59,321.5 L824.68,313.4 L824.77,291.4 L824.86,313.4 L824.95,307.6 L825.04,296.4 L825.12,313.4 L825.21,299.5 L825.30,296.4 L825.39,307.6 L825.48,303.1 L825.56,307.6 L825.65,291.4 L825.74,307.6 L825.83,335.3 L825.92,307.6 L826.01,303.1 L826.09,299.5 L826.18,307.6 L826.27,321.5 L826.36,299.5 L826.45,313.4 L826.53,313.4 L826.62,293.8 L826.71,296.4 L826.80,307.6 L826.89,307.6 L826.97,313.4 L827.06,303.1 L827.15,303.1 L827.24,313.4 L827.33,303.1 L827.42,303.1 L827.50,313.4 L827.59,296.4 L827.68,307.6 L827.77,307.6 L827.86,291.4 L827.94,291.4 L828.03,303.1 L828.12,296.4 L828.21,307.6 L828.30,299.5 L828.39,313.4 L828.47,307.6 L828.56,296.4 L828.65,335.3 L828.74,335.3 L828.83,303.1 L828.91,293.8 L829.00,307.6 L829.09,321.5 L829.18,299.5 L829.27,293.8 L829.36,293.8 L829.44,303.1 L829.53,307.6 L829.62,303.1 L829.71,307.6 L829.80,321.5 L829.88,321.5 L829.97,321.5 L830.06,293.8 L830.15,293.8 L830.24,293.8 L830.32,313.4 L830.41,303.1 L830.50,313.4 L830.59,307.6 L830.68,313.4 L830.77,307.6 L830.85,303.1 L830.94,347.5 L831.03,299.5 L831.12,303.1 L831.21,303.1 L831.29,313.4 L831.38,313.4 L831.47,303.1 L831.56,335.3 L831.65,293.8 L831.74,299.5 L831.82,293.8 L831.91,307.6 L832.00,313.4 L832.09,313.4 L832.18,296.4 L832.26,307.6 L832.35,321.5 L832.44,299.5 L832.53,303.1 L832.62,313.4 L832.70,313.4 L832.79,307.6 L832.88,321.5 L832.97,307.6 L833.06,347.5 L833.15,313.4 L833.23,307.6 L833.32,313.4 L833.41,313.4 L833.50,296.4 L833.59,299.5 L833.67,335.3 L833.76,335.3 L833.85,303.1 L833.94,299.5 L834.03,307.6 L834.12,307.6 L834.20,307.6 L834.29,296.4 L834.38,293.8 L834.47,313.4 L834.56,307.6 L834.64,313.4 L834.73,313.4 L834.82,299.5 L834.91,335.3 L835.00,307.6 L835.08,307.6 L835.17,299.5 L835.26,313.4 L835.35,299.5 L835.44,313.4 L835.53,303.1 L835.61,303.1 L835.70,293.8 L835.79,313.4 L835.88,293.8 L835.97,307.6 L836.05,299.5 L836.14,335.3 L836.23,293.8 L836.32,296.4 L836.41,307.6 L836.50,307.6 L836.58,307.6 L836.67,321.5 L836.76,313.4 L836.85,313.4 L836.94,296.4 L837.02,335.3 L837.11,303.1 L837.20,313.4 L837.29,307.6 L837.38,313.4 L837.46,303.1 L837.55,303.1 L837.64,313.4 L837.73,299.5 L837.82,313.4 L837.91,313.4 L837.99,299.5 L838.08,321.5 L838.17,347.5 L838.26,293.8 L838.35,313.4 L838.43,307.6 L838.52,291.4 L838.61,293.8 L838.70,289.3 L838.79,307.6 L838.88,307.6 L838.96,307.6 L839.05,321.5 L839.14,321.5 L839.23,347.5 L839.32,296.4 L839.40,296.4 L839.49,321.5 L839.58,299.5 L839.67,303.1 L839.76,303.1 L839.85,303.1 L839.93,307.6 L840.02,307.6 L840.11,307.6 L840.20,307.6 L840.29,303.1 L840.37,335.3 L840.46,296.4 L840.55,321.5 L840.64,299.5 L840.73,296.4 L840.81,307.6 L840.90,313.4 L840.99,299.5 L841.08,307.6 L841.17,299.5 L841.26,303.1 L841.34,303.1 L841.43,293.8 L841.52,321.5 L841.61,313.4 L841.70,307.6 L841.78,313.4 L841.87,303.1 L841.96,307.6 L842.05,293.8 L842.14,313.4 L842.23,299.5 L842.31,303.1 L842.40,303.1 L842.49,313.4 L842.58,307.6 L842.67,321.5 L842.75,313.4 L842.84,321.5 L842.93,335.3 L843.02,321.5 L843.11,303.1 L843.19,293.8 L843.28,303.1 L843.37,299.5 L843.46,313.4 L843.55,299.5 L843.64,296.4 L843.72,299.5 L843.81,299.5" stroke="#0000ff" stroke-width="1" fill="none"/></g>
<rect x="552.5" y="150.5" width="292.0" height="193.0" fill="none" stroke="#484848" stroke-width="1"/>
<path d="M553.5,343.5 V339.5" stroke="#000" stroke-width="1"/><path d="M596.5,343.5 V339.5" stroke="#000" stroke-width="1"/><path d="M640.5,343.5 V339.5" stroke="#000" stroke-width="1"/><path d="M683.5,343.5 V339.5" stroke="#000" stroke-width="1"/><path d="M727.5,343.5 V339.5" stroke="#000" stroke-width="1"/><path d="M771.5,343.5 V339.5" stroke="#000" stroke-width="1"/><path d="M814.5,343.5 V339.5" stroke="#000" stroke-width="1"/><path d="M552.5,335.5 H556.5" stroke="#000" stroke-width="1"/><path d="M552.5,289.5 H556.5" stroke="#000" stroke-width="1"/><path d="M552.5,243.5 H556.5" stroke="#000" stroke-width="1"/><path d="M552.5,197.5 H556.5" stroke="#000" stroke-width="1"/>
<text x="553.0" y="353.0" text-anchor="middle">0</text><text x="596.6" y="353.0" text-anchor="middle">15</text><text x="640.3" y="353.0" text-anchor="middle">30</text><text x="683.9" y="353.0" text-anchor="middle">45</text><text x="727.5" y="353.0" text-anchor="middle">60</text><text x="771.2" y="353.0" text-anchor="middle">75</text><text x="814.8" y="353.0" text-anchor="middle">90</text><text x="536.7" y="338.5">10</text><text x="544.9" y="335.0" font-size="6.5px">0</text><text x="536.7" y="292.5">10</text><text x="544.9" y="289.0" font-size="6.5px">1</text><text x="536.7" y="246.5">10</text><text x="544.9" y="243.0" font-size="6.5px">2</text><text x="536.7" y="200.5">10</text><text x="544.9" y="197.0" font-size="6.5px">3</text>
<text x="698.5" y="365" text-anchor="middle" font-size="8.5px">[ns]</text>
<text transform="translate(524.4,247.2) rotate(-90)" text-anchor="middle" font-size="7.5px" font-weight="bold" letter-spacing="-0.1" fill="#202020">Intens. [Cnts.]</text>
</svg>

<div class="t" style="left:513.8px;top:379.6px">Show Curve No:</div>
<div class="a" style="left:589.5px;top:376px;width:54.5px;height:16.5px;background:#fff;border:1px solid;border-color:#808080 #f4f4f2 #f4f4f2 #808080;box-shadow:inset 1px 1px #505050"></div>
<div class="t" style="left:591.8px;top:378.6px;color:#a8a8b8">0</div>
<div class="a raised" style="left:631px;top:377px;width:11.5px;height:7.5px"></div>
<div class="a raised" style="left:631px;top:384px;width:11.5px;height:7.5px"></div>
<div class="a" style="left:633.7px;top:378.8px;width:0;height:0;border-bottom:3px solid #7a7a7a;border-left:3px solid transparent;border-right:3px solid transparent"></div>
<div class="a" style="left:633.7px;top:386.3px;width:0;height:0;border-top:3px solid #7a7a7a;border-left:3px solid transparent;border-right:3px solid transparent"></div>
<div class="a" style="left:664.5px;top:376px;width:25px;height:19px;background:#e6e4e0;border:1px solid;border-color:#404040 #fff #fff #404040;box-shadow:inset 1px 1px #808080"></div>
<div class="t" style="left:671.3px;top:382.3px">log</div>

<!-- resize grip -->
<svg class="a" style="left:844px;top:403px" width="12" height="12">
<path d="M11,1.5 L1.5,11 M11,5 L5,11 M11,8.5 L8.5,11" stroke="#808080" stroke-width="1"/>
<path d="M11,2.6 L2.6,11 M11,6.1 L6.1,11" stroke="#fff" stroke-width=".7"/>
</svg>


</body></html>
